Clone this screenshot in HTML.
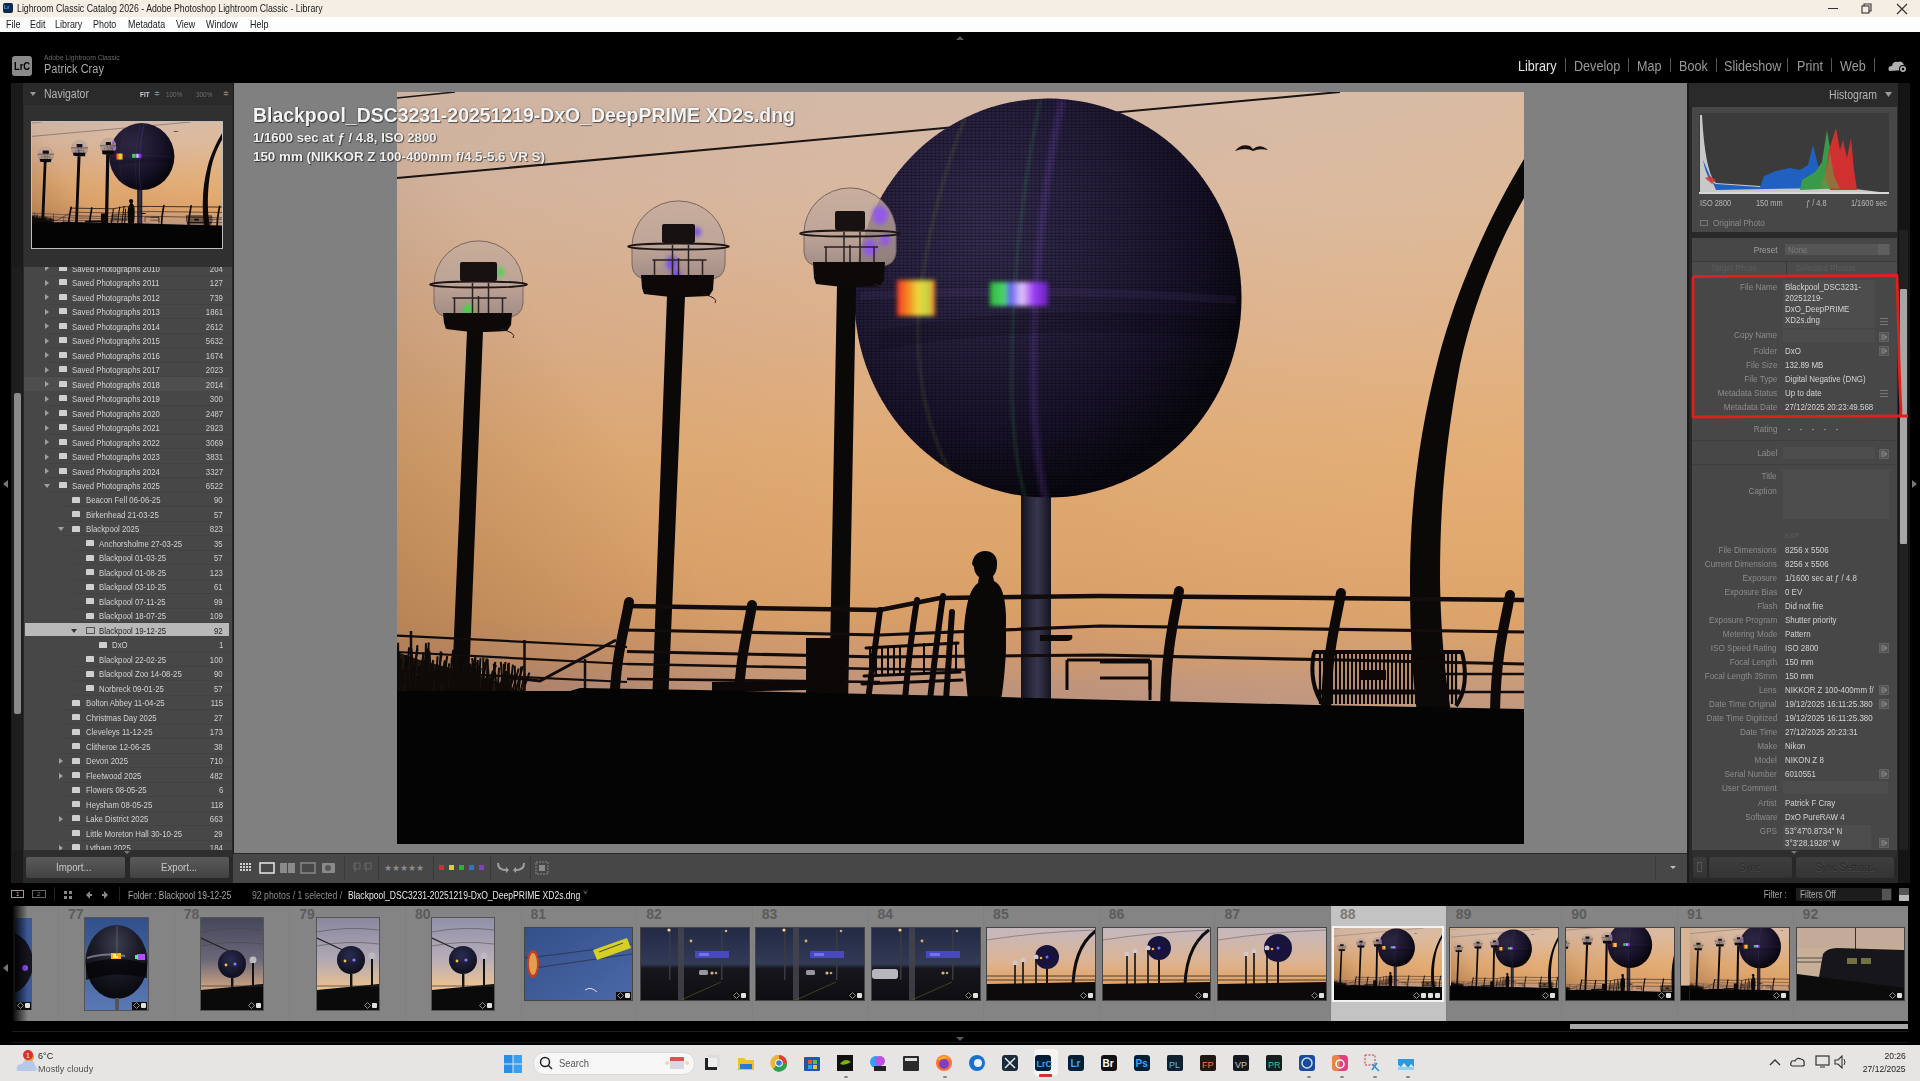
<!DOCTYPE html>
<html><head><meta charset="utf-8"><style>
html,body{margin:0;padding:0;width:1920px;height:1081px;overflow:hidden;background:#000;}
body{position:relative;font-family:"Liberation Sans",sans-serif;}
.b{position:absolute;}
.t{position:absolute;white-space:nowrap;line-height:1.2;}
svg.a{position:absolute;overflow:hidden;}
</style></head><body>
<svg width="0" height="0" style="position:absolute"><defs><symbol id="ph" viewBox="397 92 1127 752" preserveAspectRatio="none">
<defs>
<linearGradient id="sky" gradientUnits="userSpaceOnUse" x1="0" y1="92" x2="0" y2="712">
<stop offset="0" stop-color="#d4b9a8"/>
<stop offset="0.175" stop-color="#d9b89f"/>
<stop offset="0.385" stop-color="#ddb08a"/>
<stop offset="0.58" stop-color="#e0aa74"/>
<stop offset="0.74" stop-color="#dda46c"/>
<stop offset="0.85" stop-color="#d89e68"/>
<stop offset="0.915" stop-color="#cc9870"/>
<stop offset="0.96" stop-color="#bf947c"/>
<stop offset="1" stop-color="#b9927e"/>
</linearGradient>
<linearGradient id="skyd" gradientUnits="userSpaceOnUse" x1="397" y1="712" x2="680" y2="540">
<stop offset="0" stop-color="#40200e" stop-opacity="0.2"/>
<stop offset="1" stop-color="#4a2410" stop-opacity="0"/>
</linearGradient>
<linearGradient id="skyh" gradientUnits="userSpaceOnUse" x1="397" y1="0" x2="1524" y2="0">
<stop offset="0" stop-color="#3a2010" stop-opacity="0.04"/>
<stop offset="0.4" stop-color="#000" stop-opacity="0"/>
<stop offset="0.6" stop-color="#fff0c0" stop-opacity="0"/>
<stop offset="1" stop-color="#ffc878" stop-opacity="0.13"/>
</linearGradient>
<radialGradient id="sph" gradientUnits="userSpaceOnUse" cx="985" cy="225" r="275">
<stop offset="0" stop-color="#362e50"/>
<stop offset="0.45" stop-color="#261f3c"/>
<stop offset="0.78" stop-color="#171228"/>
<stop offset="1" stop-color="#0a0810"/>
</radialGradient>
<linearGradient id="dome" x1="0" y1="0" x2="0" y2="1">
<stop offset="0" stop-color="#c6ac9c" stop-opacity="0.8"/>
<stop offset="0.55" stop-color="#b8a298" stop-opacity="0.8"/>
<stop offset="1" stop-color="#9c8884" stop-opacity="0.9"/>
</linearGradient>
<pattern id="mosaic" patternUnits="userSpaceOnUse" width="4" height="3.2"><rect width="4" height="3.2" fill="none"/><rect y="2.2" width="4" height="1" fill="#000" opacity="0.35"/><rect x="3" width="1" height="3.2" fill="#000" opacity="0.2"/></pattern>
<clipPath id="sphclip"><ellipse cx="1048" cy="298" rx="193.5" ry="199.5"/></clipPath>
<filter id="blur3" x="-1" y="-1" width="3" height="3"><feGaussianBlur stdDeviation="3"/></filter>
<filter id="blur2" x="-1" y="-1" width="3" height="3"><feGaussianBlur stdDeviation="2"/></filter>
<filter id="blur1" x="-1" y="-1" width="3" height="3"><feGaussianBlur stdDeviation="1"/></filter>
</defs>
<rect x="397" y="92" width="1127" height="752" fill="url(#sky)"/>
<rect x="397" y="92" width="1127" height="752" fill="url(#skyh)"/>
<rect x="397" y="92" width="1127" height="752" fill="url(#skyd)"/>
<path d="M397 178 L1340 92" stroke="#1a1414" stroke-width="2" fill="none"/>
<path d="M397 98 L455 92" stroke="#1a1414" stroke-width="1.5" fill="none"/>
<path d="M1235 151 Q1241 143 1250 146 L1253 149 Q1260 143 1268 150 Q1259 148 1253 151 Q1246 147 1235 151Z" fill="#1a1212"/>
<defs><linearGradient id="spole" x1="0" x2="1"><stop offset="0" stop-color="#141219"/><stop offset="0.35" stop-color="#2c2a40"/><stop offset="0.55" stop-color="#38364e"/><stop offset="1" stop-color="#16141e"/></linearGradient></defs>
<path d="M1021 490 H1051 V706 H1021Z" fill="url(#spole)"/>
<ellipse cx="1048" cy="298" rx="193.5" ry="199.5" fill="url(#sph)"/>
<g clip-path="url(#sphclip)">
<path d="M968 110 C940 180 920 260 918 330 C918 400 935 450 960 490" stroke="#c0b040" stroke-width="4" opacity="0.13" fill="none" filter="url(#blur1)"/>
<path d="M1040 100 C1020 200 1010 300 1012 400 C1014 450 1020 480 1026 500" stroke="#40c060" stroke-width="4" opacity="0.16" fill="none" filter="url(#blur1)"/>
<path d="M1062 100 C1040 200 1032 300 1034 400 C1036 450 1040 480 1046 500" stroke="#a060ff" stroke-width="7" opacity="0.2" fill="none" filter="url(#blur2)"/>
<rect x="850" y="95" width="400" height="410" fill="url(#mosaic)"/>
</g>
<path d="M860 296 Q1048 286 1236 300" stroke="#6a4aa0" stroke-width="8" opacity="0.12" fill="none"/>
<path d="M880 330 Q1048 300 1236 320 L1236 340 Q1048 320 880 350Z" fill="#000" opacity="0.15"/>
<defs><linearGradient id="lyel" x1="0" x2="1"><stop offset="0" stop-color="#ff3a20"/><stop offset="0.3" stop-color="#ff9020"/><stop offset="0.55" stop-color="#f8e040"/><stop offset="0.8" stop-color="#d0e040"/><stop offset="1" stop-color="#ff8030"/></linearGradient><linearGradient id="lgp" x1="0" x2="1"><stop offset="0" stop-color="#30c040"/><stop offset="0.25" stop-color="#50e070"/><stop offset="0.35" stop-color="#6060ff"/><stop offset="0.55" stop-color="#f0d0ff"/><stop offset="0.75" stop-color="#a040ff"/><stop offset="1" stop-color="#7020c0"/></linearGradient></defs>
<rect x="897" y="280" width="38" height="36" fill="url(#lyel)" opacity="0.95" filter="url(#blur2)"/>
<rect x="990" y="282" width="58" height="24" fill="url(#lgp)" opacity="0.95" filter="url(#blur2)"/>
<path d="M434.0 284.5 A44.5 43.61 0 0 1 523.0 284.5 L523.0 303 Q522.0 317 507.0 317 L450.0 317 Q435.0 317 434.0 303Z" fill="url(#dome)" stroke="#7a6660" stroke-width="1"/>
<ellipse cx="500" cy="272" rx="4" ry="4.8" fill="#30e040" opacity="0.8" filter="url(#blur2)"/>
<ellipse cx="468" cy="310" rx="5" ry="6.0" fill="#30e040" opacity="0.8" filter="url(#blur2)"/>
<ellipse cx="478.5" cy="284.5" rx="48.5" ry="3" fill="none" stroke="#1e1616" stroke-width="1.8"/>
<rect x="460.0" y="262" width="37" height="19" rx="2" fill="#171111"/>
<path d="M452.5 298 H506.5 M454.5 298 V317 M502.5 298 V317 M472.5 283 V317 M488.5 283 V317 M478.5 296 V317" stroke="#2a2020" stroke-width="1.5"/>
<path d="M443.0 313 H512.0 L511.0 325 L507.0 331 L486.5 332 L470.5 332 L446.0 329 L444.0 323Z" fill="#0d0909"/>
<path d="M501.0 329 Q517.0 333 513.0 338" stroke="#2a1e1e" stroke-width="1" fill="none"/>
<path d="M467 331 L483 331 L468 706 L451 706Z" fill="#0b0808"/>
<path d="M632.0 246.5 A46.5 45.57 0 0 1 725.0 246.5 L725.0 265 Q724.0 279 709.0 279 L648.0 279 Q633.0 279 632.0 265Z" fill="url(#dome)" stroke="#7a6660" stroke-width="1"/>
<ellipse cx="697" cy="232" rx="4" ry="4.8" fill="#6a40ff" opacity="0.8" filter="url(#blur2)"/>
<ellipse cx="672" cy="263" rx="6" ry="7.199999999999999" fill="#6a40ff" opacity="0.8" filter="url(#blur2)"/>
<ellipse cx="676" cy="275" rx="5" ry="6.0" fill="#6a40ff" opacity="0.8" filter="url(#blur2)"/>
<ellipse cx="678.5" cy="246.5" rx="50.5" ry="3" fill="none" stroke="#1e1616" stroke-width="1.8"/>
<rect x="662.0" y="224" width="33" height="19" rx="2" fill="#171111"/>
<path d="M652.5 260 H706.5 M654.5 260 V279 M702.5 260 V279 M672.5 245 V279 M688.5 245 V279 M678.5 258 V279" stroke="#2a2020" stroke-width="1.5"/>
<path d="M641.0 275 H714.0 L713.0 290 L709.0 296 L686.5 297 L670.5 297 L644.0 294 L642.0 288Z" fill="#0d0909"/>
<path d="M703.0 294 Q719.0 298 715.0 303" stroke="#2a1e1e" stroke-width="1" fill="none"/>
<path d="M667 296 L685 296 L668 706 L652 706Z" fill="#0b0808"/>
<path d="M804.0 233.0 A46.0 45.08 0 0 1 896.0 233.0 L896.0 252 Q895.0 266 880.0 266 L820.0 266 Q805.0 266 804.0 252Z" fill="url(#dome)" stroke="#7a6660" stroke-width="1"/>
<ellipse cx="880" cy="215" rx="8" ry="9.6" fill="#9050ff" opacity="0.8" filter="url(#blur2)"/>
<ellipse cx="870" cy="248" rx="7" ry="8.4" fill="#9050ff" opacity="0.8" filter="url(#blur2)"/>
<ellipse cx="885" cy="240" rx="5" ry="6.0" fill="#9050ff" opacity="0.8" filter="url(#blur2)"/>
<ellipse cx="850" cy="233.5" rx="50.0" ry="3" fill="none" stroke="#1e1616" stroke-width="1.8"/>
<rect x="835.0" y="211" width="30" height="19" rx="2" fill="#171111"/>
<path d="M824 247 H878 M826 247 V266 M874 247 V266 M844 232 V266 M860 232 V266 M850 245 V266" stroke="#2a2020" stroke-width="1.5"/>
<path d="M813.0 262 H885.0 L884.0 280 L880.0 286 L858 287 L842 287 L816.0 284 L814.0 278Z" fill="#0d0909"/>
<path d="M874.0 284 Q890.0 288 886.0 293" stroke="#2a1e1e" stroke-width="1" fill="none"/>
<path d="M837 286 L856 286 L848 706 L829 706Z" fill="#0b0808"/>
<path d="M1524 159 C1490 215 1456 290 1438 360 C1420 430 1410 500 1410 580 C1410 640 1413 680 1417 712 L1451 712 C1446 680 1441 640 1440 580 C1440 500 1446 440 1460 365 C1474 300 1500 240 1524 198Z" fill="#0b0808"/>
<g stroke="#120c0c" fill="none">
<path d="M397 635.6 L627 647 M397 652 L627 664 M397 671 L627 682" stroke-width="2.2"/>
<path d="M411 631 V692 M524.5 640 V694 M585 659 V694" stroke-width="2.5"/>
<path d="M506 677 L540 681 L616 640" stroke-width="3"/>
<path d="M627 606 L880 610 L940 598 L1100 596 L1524 600" stroke-width="4.5"/>
<path d="M627 630 L880 635 L1100 626 L1524 632" stroke-width="3.2"/>
<path d="M627 651.5 L880 657 L1100 655 L1340 660 L1524 664" stroke-width="3.2"/>
<path d="M627 664 L880 669 L1000 670 M627 679 L880 682 M1440 674 L1524 674 M1440 692 L1524 692" stroke-width="2.6"/>
</g>
<path d="M629 602 C625 627 615 657 614 712" stroke="#0e0909" stroke-width="10" fill="none" stroke-linecap="round"/>
<path d="M752 605 C748 630 739 660 738 712" stroke="#0e0909" stroke-width="10" fill="none" stroke-linecap="round"/>
<path d="M1179 591 C1175 616 1166 646 1165 712" stroke="#0e0909" stroke-width="10" fill="none" stroke-linecap="round"/>
<path d="M1341 593 C1337 618 1327 648 1326 712" stroke="#0e0909" stroke-width="10" fill="none" stroke-linecap="round"/>
<path d="M1510 595 C1506 620 1496 650 1495 712" stroke="#0e0909" stroke-width="10" fill="none" stroke-linecap="round"/>
<rect x="806" y="638" width="40" height="60" fill="#0c0808"/>
<path d="M712 682 L806 680 L806 690 L712 692Z" fill="#0c0808"/>
<g stroke="#0c0808" stroke-linecap="round" fill="none">
<path d="M880 610 C876 640 872 670 868 700 M917 600 C912 630 908 665 905 700 M943 596 C938 630 934 665 930 700 M952 612 C950 640 948 670 946 700" stroke-width="6"/>
<path d="M866 648 L958 643 M864 676 L960 672 M862 684 L962 680" stroke-width="3"/>
<path d="M870 648 V676 M876 648 V676 M882 647 V675 M888 647 V675 M894 646 V674 M900 646 V674 M924 644 V673 M950 643 V672 M956 643 V672" stroke-width="2"/>
</g>
<path d="M1100 662 H1150 V700 M1100 678 H1150" stroke="#0c0808" stroke-width="3" fill="none"/>
<path d="M1040 635 H1072 Q1074 640 1068 641 H1040Z" fill="#0c0808"/>
<path d="M1067 660 H1150 M1067 660 V690 M1150 660 V690" stroke="#0c0808" stroke-width="3" fill="none"/>
<path d="M1314 652 Q1308 684 1324 706 M1462 652 Q1470 686 1456 706" stroke="#0c0808" stroke-width="4" fill="none"/>
<path d="M1313 652 H1463" stroke="#0c0808" stroke-width="4"/>
<path d="M1316 692 H1460" stroke="#0c0808" stroke-width="5"/>
<g stroke="#0c0808" stroke-width="2.2"><path d="M1320 654 V704"/><path d="M1324 654 V704"/><path d="M1328 654 V704"/><path d="M1332 654 V704"/><path d="M1336 654 V704"/><path d="M1340 654 V704"/><path d="M1344 654 V704"/><path d="M1348 654 V704"/><path d="M1352 654 V704"/><path d="M1356 654 V704"/><path d="M1360 654 V704"/><path d="M1364 654 V704"/><path d="M1368 654 V704"/><path d="M1372 654 V704"/><path d="M1376 654 V704"/><path d="M1380 654 V704"/><path d="M1384 654 V704"/><path d="M1388 654 V704"/><path d="M1392 654 V704"/><path d="M1396 654 V704"/><path d="M1400 654 V704"/><path d="M1404 654 V704"/><path d="M1408 654 V704"/><path d="M1412 654 V704"/><path d="M1416 654 V704"/><path d="M1420 654 V704"/><path d="M1424 654 V704"/><path d="M1428 654 V704"/><path d="M1432 654 V704"/><path d="M1436 654 V704"/><path d="M1440 654 V704"/><path d="M1444 654 V704"/><path d="M1448 654 V704"/><path d="M1452 654 V704"/><path d="M1456 654 V704"/></g>
<rect x="1360" y="670" width="26" height="10" fill="#0c0808"/>
<path d="M985 551 C993 551 998 557 997 565 C997 570 995 574 993 576 L994 581 C1002 585 1005 596 1006 615 L1006 650 C1005 670 1003 690 1001 700 L968 700 C966 680 963 652 964 630 C966 602 970 589 978 583 L979 577 C976 575 974 571 974 567 L972 564 C973 556 978 551 985 551Z" fill="#0a0707"/>
<g stroke="#0f0b09" stroke-width="2" fill="none"><path d="M426.7 700 Q427.2 679.8 427.7 659.6"/><path d="M472.5 700 Q470.8 681.8 469.2 663.7"/><path d="M398.6 700 Q398.4 671.3 398.1 642.7"/><path d="M426.3 700 Q427.5 671.2 428.7 642.5"/><path d="M501.6 700 Q503.9 685.5 506.3 671.0"/><path d="M415.8 700 Q419.8 677.2 423.8 654.4"/><path d="M462.4 700 Q465.0 679.4 467.6 658.8"/><path d="M405.0 700 Q407.0 673.7 409.1 647.4"/><path d="M434.7 700 Q438.6 689.4 442.6 678.9"/><path d="M456.1 700 Q460.1 679.1 464.2 658.3"/><path d="M486.3 700 Q486.9 679.6 487.6 659.1"/><path d="M497.1 700 Q501.6 685.6 506.0 671.1"/><path d="M506.9 700 Q505.7 689.1 504.6 678.3"/><path d="M424.1 700 Q425.1 671.6 426.0 643.1"/><path d="M475.3 700 Q476.8 686.2 478.2 672.3"/><path d="M445.2 700 Q447.2 684.2 449.2 668.4"/><path d="M470.0 700 Q472.7 677.9 475.4 655.8"/><path d="M513.1 700 Q518.0 683.2 522.8 666.3"/><path d="M480.9 700 Q484.8 688.0 488.8 676.1"/><path d="M517.6 700 Q519.5 683.3 521.3 666.6"/><path d="M486.2 700 Q489.9 687.6 493.7 675.2"/><path d="M468.7 700 Q467.0 686.1 465.4 672.3"/><path d="M503.7 700 Q502.3 680.9 500.8 661.9"/><path d="M497.1 700 Q496.0 685.9 495.0 671.8"/><path d="M433.7 700 Q437.7 676.2 441.8 652.5"/><path d="M402.5 700 Q400.7 676.6 399.0 653.2"/><path d="M486.8 700 Q490.9 686.3 494.9 672.5"/><path d="M519.6 700 Q524.5 686.4 529.4 672.7"/><path d="M435.7 700 Q437.8 688.6 439.9 677.3"/><path d="M400.9 700 Q401.7 685.7 402.4 671.3"/><path d="M473.3 700 Q471.5 688.0 469.7 676.0"/><path d="M505.5 700 Q510.1 687.2 514.7 674.4"/><path d="M509.1 700 Q510.2 686.8 511.3 673.6"/><path d="M462.0 700 Q464.1 680.7 466.1 661.5"/><path d="M466.9 700 Q471.4 681.5 475.9 662.9"/><path d="M460.4 700 Q463.3 683.7 466.3 667.4"/><path d="M426.7 700 Q431.4 684.3 436.2 668.7"/><path d="M462.1 700 Q460.1 682.1 458.1 664.3"/><path d="M448.9 700 Q446.9 680.7 445.0 661.4"/><path d="M474.0 700 Q472.3 681.9 470.6 663.7"/><path d="M475.4 700 Q478.1 684.1 480.7 668.2"/><path d="M441.1 700 Q444.1 678.0 447.2 656.0"/><path d="M399.8 700 Q402.4 688.7 405.0 677.3"/><path d="M517.4 700 Q518.5 688.1 519.6 676.3"/><path d="M471.1 700 Q471.5 685.8 472.0 671.5"/><path d="M436.1 700 Q438.2 683.5 440.2 667.0"/><path d="M434.6 700 Q437.9 683.3 441.2 666.6"/><path d="M400.4 700 Q403.4 677.4 406.5 654.9"/><path d="M435.8 700 Q439.3 686.1 442.8 672.1"/><path d="M426.8 700 Q427.8 686.5 428.7 673.0"/><path d="M484.3 700 Q484.4 688.8 484.6 677.6"/><path d="M438.7 700 Q439.7 675.6 440.7 651.2"/><path d="M503.9 700 Q504.2 688.5 504.5 676.9"/><path d="M478.3 700 Q479.3 679.1 480.4 658.2"/><path d="M425.1 700 Q426.7 687.7 428.3 675.4"/><path d="M420.9 700 Q424.6 674.3 428.4 648.5"/><path d="M419.9 700 Q423.5 684.5 427.0 669.1"/><path d="M477.2 700 Q477.6 679.9 477.9 659.9"/><path d="M413.2 700 Q416.7 684.0 420.1 668.0"/><path d="M430.9 700 Q431.7 683.7 432.5 667.3"/><path d="M449.5 700 Q453.8 683.5 458.2 666.9"/><path d="M416.5 700 Q421.0 689.9 425.5 679.8"/><path d="M507.0 700 Q507.9 681.4 508.9 662.7"/><path d="M515.8 700 Q515.2 682.9 514.7 665.8"/><path d="M490.2 700 Q492.7 680.9 495.3 661.8"/><path d="M461.9 700 Q462.2 685.8 462.5 671.7"/><path d="M425.4 700 Q427.5 688.7 429.5 677.4"/><path d="M432.9 700 Q431.1 675.4 429.3 650.8"/><path d="M510.0 700 Q514.3 684.2 518.7 668.4"/><path d="M509.1 700 Q511.0 682.4 512.9 664.7"/><path d="M398.6 700 Q397.7 673.4 396.8 646.8"/><path d="M434.5 700 Q436.1 678.2 437.6 656.4"/><path d="M448.7 700 Q450.9 674.9 453.1 649.9"/><path d="M439.7 700 Q443.6 685.7 447.5 671.3"/><path d="M456.6 700 Q457.0 678.2 457.4 656.5"/><path d="M421.7 700 Q425.3 679.6 428.9 659.2"/><path d="M418.4 700 Q422.8 674.3 427.1 648.6"/><path d="M497.8 700 Q495.7 681.8 493.7 663.7"/><path d="M475.6 700 Q473.8 679.1 472.1 658.1"/><path d="M430.9 700 Q432.5 685.1 434.1 670.2"/><path d="M449.9 700 Q453.2 682.5 456.5 665.0"/><path d="M397.2 700 Q396.0 688.8 394.8 677.5"/><path d="M412.6 700 Q417.3 688.6 422.0 677.2"/><path d="M503.8 700 Q505.2 689.2 506.6 678.4"/><path d="M436.5 700 Q436.8 684.5 437.2 668.9"/><path d="M477.9 700 Q478.3 682.7 478.7 665.5"/><path d="M420.9 700 Q419.7 683.6 418.4 667.2"/><path d="M466.4 700 Q467.0 680.1 467.6 660.2"/><path d="M407.0 700 Q407.5 686.2 408.0 672.4"/><path d="M472.6 700 Q473.1 679.8 473.7 659.6"/><path d="M497.1 700 Q498.1 683.8 499.0 667.6"/><path d="M443.6 700 Q446.4 681.7 449.2 663.4"/><path d="M449.6 700 Q450.7 678.9 451.8 657.9"/><path d="M427.6 700 Q430.4 680.0 433.2 660.0"/><path d="M405.9 700 Q406.8 680.9 407.7 661.8"/><path d="M507.0 700 Q507.5 681.8 508.0 663.6"/><path d="M509.2 700 Q509.0 683.3 508.7 666.6"/><path d="M455.0 700 Q458.6 688.1 462.2 676.2"/><path d="M479.8 700 Q483.2 679.2 486.7 658.4"/><path d="M480.4 700 Q482.3 681.1 484.1 662.3"/><path d="M409.9 700 Q407.8 677.7 405.8 655.4"/><path d="M414.9 700 Q413.1 674.3 411.4 648.6"/><path d="M408.5 700 Q412.5 687.9 416.6 675.8"/><path d="M419.4 700 Q423.2 689.5 427.0 679.1"/><path d="M412.2 700 Q414.8 672.6 417.4 645.2"/><path d="M501.5 700 Q503.5 681.0 505.4 662.0"/><path d="M496.8 700 Q500.1 689.6 503.4 679.3"/><path d="M460.9 700 Q459.6 679.6 458.2 659.2"/><path d="M490.6 700 Q488.9 679.9 487.3 659.8"/><path d="M437.5 700 Q441.2 680.2 444.9 660.3"/><path d="M427.3 700 Q426.9 686.6 426.6 673.3"/><path d="M474.0 700 Q474.7 680.3 475.3 660.6"/><path d="M442.9 700 Q443.3 683.4 443.6 666.7"/><path d="M449.3 700 Q450.7 688.7 452.1 677.3"/><path d="M518.6 700 Q521.8 687.0 524.9 674.0"/><path d="M417.1 700 Q420.3 676.2 423.5 652.4"/><path d="M481.2 700 Q482.5 683.8 483.8 667.6"/><path d="M477.4 700 Q476.3 678.8 475.3 657.6"/><path d="M409.0 700 Q413.3 674.3 417.6 648.6"/><path d="M461.7 700 Q464.6 683.6 467.5 667.2"/><path d="M420.3 700 Q419.6 684.8 418.9 669.5"/><path d="M470.2 700 Q469.7 685.8 469.3 671.6"/><path d="M483.4 700 Q483.4 678.8 483.3 657.7"/><path d="M485.2 700 Q489.0 685.3 492.9 670.5"/><path d="M470.1 700 Q469.5 686.4 468.9 672.9"/><path d="M399.9 700 Q400.5 679.4 401.0 658.8"/><path d="M418.5 700 Q418.7 682.9 418.8 665.7"/><path d="M493.8 700 Q498.6 688.5 503.5 677.0"/><path d="M456.9 700 Q458.1 681.0 459.3 662.0"/><path d="M501.3 700 Q503.1 682.2 504.9 664.5"/><path d="M457.2 700 Q461.1 679.2 465.0 658.4"/><path d="M447.0 700 Q451.7 678.1 456.3 656.2"/><path d="M455.4 700 Q455.0 686.5 454.5 673.0"/><path d="M486.7 700 Q491.3 682.4 495.9 664.8"/><path d="M503.7 700 Q503.0 687.8 502.2 675.6"/><path d="M429.3 700 Q432.2 686.5 435.0 673.1"/><path d="M504.3 700 Q504.0 681.8 503.7 663.7"/><path d="M505.1 700 Q506.0 687.2 506.9 674.4"/><path d="M488.1 700 Q486.7 689.0 485.2 678.1"/><path d="M501.2 700 Q501.6 687.2 502.0 674.5"/></g>
<path d="M397 700 L397 652 L420 660 L450 668 L480 676 L510 686 L530 700Z" fill="#0f0b09" opacity="0.92"/>
<path d="M397 691 L570 691 L580 688 L700 690 L1000 697 L1315 705 L1524 709 L1524 844 L397 844Z" fill="#050404"/>
</symbol></defs></svg>
<div class="b" style="left:0px;top:0px;width:1920px;height:17px;background:#f4eee5;"></div>
<div class="b" style="left:0px;top:17px;width:1920px;height:15px;background:#fdfdfd;"></div>
<div class="b" style="left:3px;top:3px;width:10px;height:10px;background:#0b2a4a;border-radius:2px;"></div>
<div class="t" style="left:4px;top:4.4px;font-size:6px;color:#5aa8ff;font-weight:bold;transform:scaleX(0.9);transform-origin:0 0;">Lr</div>
<div class="t" style="left:17px;top:2.2px;font-size:10.5px;color:#202020;transform:scaleX(0.835);transform-origin:0 0;">Lighroom Classic Catalog 2026 - Adobe Photoshop Lightroom Classic - Library</div>
<div class="t" style="left:6px;top:18.2px;font-size:10.5px;color:#202020;transform:scaleX(0.85);transform-origin:0 0;">File</div>
<div class="t" style="left:30px;top:18.2px;font-size:10.5px;color:#202020;transform:scaleX(0.85);transform-origin:0 0;">Edit</div>
<div class="t" style="left:55px;top:18.2px;font-size:10.5px;color:#202020;transform:scaleX(0.85);transform-origin:0 0;">Library</div>
<div class="t" style="left:93px;top:18.2px;font-size:10.5px;color:#202020;transform:scaleX(0.85);transform-origin:0 0;">Photo</div>
<div class="t" style="left:128px;top:18.2px;font-size:10.5px;color:#202020;transform:scaleX(0.85);transform-origin:0 0;">Metadata</div>
<div class="t" style="left:176px;top:18.2px;font-size:10.5px;color:#202020;transform:scaleX(0.85);transform-origin:0 0;">View</div>
<div class="t" style="left:206px;top:18.2px;font-size:10.5px;color:#202020;transform:scaleX(0.85);transform-origin:0 0;">Window</div>
<div class="t" style="left:250px;top:18.2px;font-size:10.5px;color:#202020;transform:scaleX(0.85);transform-origin:0 0;">Help</div>
<div class="b" style="left:1828px;top:8px;width:10px;height:1px;background:#333;"></div>
<svg class="a" style="left:1861px;top:3px" width="11" height="11"><rect x="1" y="3" width="7" height="7" fill="none" stroke="#333" stroke-width="1.1"/><path d="M3 3 V1 H10 V8 H8" fill="none" stroke="#333" stroke-width="1.1"/></svg>
<svg class="a" style="left:1896px;top:3px" width="12" height="12"><path d="M1 1L11 11M11 1L1 11" stroke="#333" stroke-width="1.2"/></svg>
<div class="b" style="left:0px;top:32px;width:1920px;height:51px;background:#000;"></div>
<div class="b" style="left:12px;top:56px;width:20px;height:20px;background:#8a8a8a;border-radius:3px;"></div>
<div class="t" style="left:13.5px;top:59.9px;font-size:11px;color:#000;font-weight:bold;transform:scaleX(0.85);transform-origin:0 0;">LrC</div>
<div class="t" style="left:44px;top:53.2px;font-size:8px;color:#6a6a6a;transform:scaleX(0.85);transform-origin:0 0;">Adobe Lightroom Classic</div>
<div class="t" style="left:44px;top:61.5px;font-size:12.5px;color:#a8a8a8;transform:scaleX(0.88);transform-origin:0 0;">Patrick Cray</div>
<div class="t" style="left:1517.5px;top:57.6px;font-size:14px;color:#e6e6e6;transform:scaleX(0.9);transform-origin:0 0;">Library</div>
<div class="t" style="left:1574px;top:57.6px;font-size:14px;color:#9a9a9a;transform:scaleX(0.9);transform-origin:0 0;">Develop</div>
<div class="t" style="left:1637px;top:57.6px;font-size:14px;color:#9a9a9a;transform:scaleX(0.9);transform-origin:0 0;">Map</div>
<div class="t" style="left:1679px;top:57.6px;font-size:14px;color:#9a9a9a;transform:scaleX(0.9);transform-origin:0 0;">Book</div>
<div class="t" style="left:1724px;top:57.6px;font-size:14px;color:#9a9a9a;transform:scaleX(0.9);transform-origin:0 0;">Slideshow</div>
<div class="t" style="left:1797px;top:57.6px;font-size:14px;color:#9a9a9a;transform:scaleX(0.9);transform-origin:0 0;">Print</div>
<div class="t" style="left:1840px;top:57.6px;font-size:14px;color:#9a9a9a;transform:scaleX(0.9);transform-origin:0 0;">Web</div>
<div class="b" style="left:1565px;top:58px;width:1px;height:14px;background:#555;"></div>
<div class="b" style="left:1628px;top:58px;width:1px;height:14px;background:#555;"></div>
<div class="b" style="left:1670px;top:58px;width:1px;height:14px;background:#555;"></div>
<div class="b" style="left:1716px;top:58px;width:1px;height:14px;background:#555;"></div>
<div class="b" style="left:1787px;top:58px;width:1px;height:14px;background:#555;"></div>
<div class="b" style="left:1831px;top:58px;width:1px;height:14px;background:#555;"></div>
<div class="b" style="left:1874px;top:58px;width:1px;height:14px;background:#555;"></div>
<svg class="a" style="left:1887px;top:58px" width="22" height="16"><path d="M2 13 Q0 8 5 8 Q6 3 11 4 Q15 2 17 7 Q20 8 19 12 Z" fill="#b0b0b0"/><circle cx="16" cy="11" r="4" fill="#000"/><circle cx="16" cy="11" r="3" fill="#b0b0b0"/><circle cx="16" cy="11" r="1.3" fill="#000"/></svg>
<div class="b" style="left:11px;top:83px;width:12px;height:800px;background:#1a1a1a;"></div>
<div class="b" style="left:23px;top:83px;width:210px;height:800px;background:#282828;"></div>
<div class="b" style="left:23px;top:84px;width:209px;height:21px;background:#2a2a2a;"></div>
<svg class="a" style="left:30px;top:92px" width="6" height="5"><path d="M0 0H6L3 4Z" fill="#9a9a9a"/></svg>
<div class="t" style="left:43.5px;top:87.0px;font-size:12.5px;color:#b4b4b4;transform:scaleX(0.84);transform-origin:0 0;">Navigator</div>
<div class="t" style="left:140px;top:90.0px;font-size:7.5px;color:#d0d0d0;font-weight:bold;transform:scaleX(0.85);transform-origin:0 0;">FIT</div>
<div class="t" style="left:154px;top:89.8px;font-size:7px;color:#888;transform:scaleX(1);transform-origin:0 0;">≑</div>
<div class="t" style="left:166px;top:90.0px;font-size:7.5px;color:#707070;transform:scaleX(0.85);transform-origin:0 0;">100%</div>
<div class="t" style="left:196px;top:90.0px;font-size:7.5px;color:#707070;transform:scaleX(0.85);transform-origin:0 0;">300%</div>
<div class="t" style="left:223px;top:89.8px;font-size:7px;color:#888;transform:scaleX(1);transform-origin:0 0;">≑</div>
<div class="b" style="left:24px;top:105px;width:208px;height:162px;background:#303030;"></div>
<div class="b" style="left:31px;top:121px;width:192px;height:128px;background:#bdbdbd;"></div>
<svg class="a" style="left:32px;top:122px" width="190" height="126"><use href="#ph" x="0" y="0" width="190" height="126"/></svg>
<div class="b" style="left:24px;top:267px;width:208px;height:583px;background:#474747;"></div>
<div class="b" style="left:12px;top:267px;width:10px;height:583px;background:#1e1e1e;"></div>
<div class="b" style="left:14px;top:393px;width:7px;height:321px;background:#8a8a8a;border-radius:2px;"></div>
<div class="b" style="left:24px;top:267px;width:208px;height:583px;overflow:hidden;">
<div class="b" style="left:24.0px;top:7.560000000000002px;width:181.0px;height:1px;background:#424242;"></div>
<svg class="a" style="left:21.3px;top:-1.7px" width="5" height="6"><path d="M0 0L4 3L0 6Z" fill="#a0a0a0"/></svg>
<div class="b" style="left:34.8px;top:-2.2px;width:8px;height:6px;background:#cfcfcf;border-radius:1px 1px 0 0;"></div>
<div class="t" style="left:48.099999999999994px;top:-4.4px;font-size:9.5px;color:#d2d2d2;transform:scaleX(0.82);transform-origin:0 0;">Saved Photographs 2010</div>
<div class="t" style="right:9.2px;top:-4.4px;font-size:9.5px;color:#cfcfcf;transform:scaleX(0.82);transform-origin:100% 0;">204</div>
<div class="b" style="left:24.0px;top:22.05000000000001px;width:181.0px;height:1px;background:#424242;"></div>
<svg class="a" style="left:21.3px;top:12.8px" width="5" height="6"><path d="M0 0L4 3L0 6Z" fill="#a0a0a0"/></svg>
<div class="b" style="left:34.8px;top:12.3px;width:8px;height:6px;background:#cfcfcf;border-radius:1px 1px 0 0;"></div>
<div class="t" style="left:48.099999999999994px;top:10.1px;font-size:9.5px;color:#d2d2d2;transform:scaleX(0.82);transform-origin:0 0;">Saved Photographs 2011</div>
<div class="t" style="right:9.2px;top:10.1px;font-size:9.5px;color:#cfcfcf;transform:scaleX(0.82);transform-origin:100% 0;">127</div>
<div class="b" style="left:24.0px;top:36.54000000000002px;width:181.0px;height:1px;background:#424242;"></div>
<svg class="a" style="left:21.3px;top:27.3px" width="5" height="6"><path d="M0 0L4 3L0 6Z" fill="#a0a0a0"/></svg>
<div class="b" style="left:34.8px;top:26.8px;width:8px;height:6px;background:#cfcfcf;border-radius:1px 1px 0 0;"></div>
<div class="t" style="left:48.099999999999994px;top:24.6px;font-size:9.5px;color:#d2d2d2;transform:scaleX(0.82);transform-origin:0 0;">Saved Photographs 2012</div>
<div class="t" style="right:9.2px;top:24.6px;font-size:9.5px;color:#cfcfcf;transform:scaleX(0.82);transform-origin:100% 0;">739</div>
<div class="b" style="left:24.0px;top:51.03000000000003px;width:181.0px;height:1px;background:#424242;"></div>
<svg class="a" style="left:21.3px;top:41.8px" width="5" height="6"><path d="M0 0L4 3L0 6Z" fill="#a0a0a0"/></svg>
<div class="b" style="left:34.8px;top:41.3px;width:8px;height:6px;background:#cfcfcf;border-radius:1px 1px 0 0;"></div>
<div class="t" style="left:48.099999999999994px;top:39.1px;font-size:9.5px;color:#d2d2d2;transform:scaleX(0.82);transform-origin:0 0;">Saved Photographs 2013</div>
<div class="t" style="right:9.2px;top:39.1px;font-size:9.5px;color:#cfcfcf;transform:scaleX(0.82);transform-origin:100% 0;">1861</div>
<div class="b" style="left:24.0px;top:65.51999999999998px;width:181.0px;height:1px;background:#424242;"></div>
<svg class="a" style="left:21.3px;top:56.3px" width="5" height="6"><path d="M0 0L4 3L0 6Z" fill="#a0a0a0"/></svg>
<div class="b" style="left:34.8px;top:55.8px;width:8px;height:6px;background:#cfcfcf;border-radius:1px 1px 0 0;"></div>
<div class="t" style="left:48.099999999999994px;top:53.6px;font-size:9.5px;color:#d2d2d2;transform:scaleX(0.82);transform-origin:0 0;">Saved Photographs 2014</div>
<div class="t" style="right:9.2px;top:53.6px;font-size:9.5px;color:#cfcfcf;transform:scaleX(0.82);transform-origin:100% 0;">2612</div>
<div class="b" style="left:24.0px;top:80.00999999999999px;width:181.0px;height:1px;background:#424242;"></div>
<svg class="a" style="left:21.3px;top:70.8px" width="5" height="6"><path d="M0 0L4 3L0 6Z" fill="#a0a0a0"/></svg>
<div class="b" style="left:34.8px;top:70.3px;width:8px;height:6px;background:#cfcfcf;border-radius:1px 1px 0 0;"></div>
<div class="t" style="left:48.099999999999994px;top:68.1px;font-size:9.5px;color:#d2d2d2;transform:scaleX(0.82);transform-origin:0 0;">Saved Photographs 2015</div>
<div class="t" style="right:9.2px;top:68.1px;font-size:9.5px;color:#cfcfcf;transform:scaleX(0.82);transform-origin:100% 0;">5632</div>
<div class="b" style="left:24.0px;top:94.5px;width:181.0px;height:1px;background:#424242;"></div>
<svg class="a" style="left:21.3px;top:85.2px" width="5" height="6"><path d="M0 0L4 3L0 6Z" fill="#a0a0a0"/></svg>
<div class="b" style="left:34.8px;top:84.8px;width:8px;height:6px;background:#cfcfcf;border-radius:1px 1px 0 0;"></div>
<div class="t" style="left:48.099999999999994px;top:82.5px;font-size:9.5px;color:#d2d2d2;transform:scaleX(0.82);transform-origin:0 0;">Saved Photographs 2016</div>
<div class="t" style="right:9.2px;top:82.5px;font-size:9.5px;color:#cfcfcf;transform:scaleX(0.82);transform-origin:100% 0;">1674</div>
<div class="b" style="left:24.0px;top:108.99000000000001px;width:181.0px;height:1px;background:#424242;"></div>
<svg class="a" style="left:21.3px;top:99.7px" width="5" height="6"><path d="M0 0L4 3L0 6Z" fill="#a0a0a0"/></svg>
<div class="b" style="left:34.8px;top:99.2px;width:8px;height:6px;background:#cfcfcf;border-radius:1px 1px 0 0;"></div>
<div class="t" style="left:48.099999999999994px;top:97.0px;font-size:9.5px;color:#d2d2d2;transform:scaleX(0.82);transform-origin:0 0;">Saved Photographs 2017</div>
<div class="t" style="right:9.2px;top:97.0px;font-size:9.5px;color:#cfcfcf;transform:scaleX(0.82);transform-origin:100% 0;">2023</div>
<div class="b" style="left:0px;top:109.98000000000002px;width:205px;height:14px;background:#4e4e4e;"></div>
<svg class="a" style="left:21.3px;top:114.2px" width="5" height="6"><path d="M0 0L4 3L0 6Z" fill="#a0a0a0"/></svg>
<div class="b" style="left:34.8px;top:113.7px;width:8px;height:6px;background:#cfcfcf;border-radius:1px 1px 0 0;"></div>
<div class="t" style="left:48.099999999999994px;top:111.5px;font-size:9.5px;color:#d2d2d2;transform:scaleX(0.82);transform-origin:0 0;">Saved Photographs 2018</div>
<div class="t" style="right:9.2px;top:111.5px;font-size:9.5px;color:#cfcfcf;transform:scaleX(0.82);transform-origin:100% 0;">2014</div>
<div class="b" style="left:24.0px;top:137.97000000000003px;width:181.0px;height:1px;background:#424242;"></div>
<svg class="a" style="left:21.3px;top:128.7px" width="5" height="6"><path d="M0 0L4 3L0 6Z" fill="#a0a0a0"/></svg>
<div class="b" style="left:34.8px;top:128.2px;width:8px;height:6px;background:#cfcfcf;border-radius:1px 1px 0 0;"></div>
<div class="t" style="left:48.099999999999994px;top:126.0px;font-size:9.5px;color:#d2d2d2;transform:scaleX(0.82);transform-origin:0 0;">Saved Photographs 2019</div>
<div class="t" style="right:9.2px;top:126.0px;font-size:9.5px;color:#cfcfcf;transform:scaleX(0.82);transform-origin:100% 0;">300</div>
<div class="b" style="left:24.0px;top:152.46000000000004px;width:181.0px;height:1px;background:#424242;"></div>
<svg class="a" style="left:21.3px;top:143.2px" width="5" height="6"><path d="M0 0L4 3L0 6Z" fill="#a0a0a0"/></svg>
<div class="b" style="left:34.8px;top:142.7px;width:8px;height:6px;background:#cfcfcf;border-radius:1px 1px 0 0;"></div>
<div class="t" style="left:48.099999999999994px;top:140.5px;font-size:9.5px;color:#d2d2d2;transform:scaleX(0.82);transform-origin:0 0;">Saved Photographs 2020</div>
<div class="t" style="right:9.2px;top:140.5px;font-size:9.5px;color:#cfcfcf;transform:scaleX(0.82);transform-origin:100% 0;">2487</div>
<div class="b" style="left:24.0px;top:166.95000000000005px;width:181.0px;height:1px;background:#424242;"></div>
<svg class="a" style="left:21.3px;top:157.7px" width="5" height="6"><path d="M0 0L4 3L0 6Z" fill="#a0a0a0"/></svg>
<div class="b" style="left:34.8px;top:157.2px;width:8px;height:6px;background:#cfcfcf;border-radius:1px 1px 0 0;"></div>
<div class="t" style="left:48.099999999999994px;top:155.0px;font-size:9.5px;color:#d2d2d2;transform:scaleX(0.82);transform-origin:0 0;">Saved Photographs 2021</div>
<div class="t" style="right:9.2px;top:155.0px;font-size:9.5px;color:#cfcfcf;transform:scaleX(0.82);transform-origin:100% 0;">2923</div>
<div class="b" style="left:24.0px;top:181.44000000000005px;width:181.0px;height:1px;background:#424242;"></div>
<svg class="a" style="left:21.3px;top:172.2px" width="5" height="6"><path d="M0 0L4 3L0 6Z" fill="#a0a0a0"/></svg>
<div class="b" style="left:34.8px;top:171.7px;width:8px;height:6px;background:#cfcfcf;border-radius:1px 1px 0 0;"></div>
<div class="t" style="left:48.099999999999994px;top:169.5px;font-size:9.5px;color:#d2d2d2;transform:scaleX(0.82);transform-origin:0 0;">Saved Photographs 2022</div>
<div class="t" style="right:9.2px;top:169.5px;font-size:9.5px;color:#cfcfcf;transform:scaleX(0.82);transform-origin:100% 0;">3069</div>
<div class="b" style="left:24.0px;top:195.93px;width:181.0px;height:1px;background:#424242;"></div>
<svg class="a" style="left:21.3px;top:186.7px" width="5" height="6"><path d="M0 0L4 3L0 6Z" fill="#a0a0a0"/></svg>
<div class="b" style="left:34.8px;top:186.2px;width:8px;height:6px;background:#cfcfcf;border-radius:1px 1px 0 0;"></div>
<div class="t" style="left:48.099999999999994px;top:184.0px;font-size:9.5px;color:#d2d2d2;transform:scaleX(0.82);transform-origin:0 0;">Saved Photographs 2023</div>
<div class="t" style="right:9.2px;top:184.0px;font-size:9.5px;color:#cfcfcf;transform:scaleX(0.82);transform-origin:100% 0;">3831</div>
<div class="b" style="left:24.0px;top:210.42000000000002px;width:181.0px;height:1px;background:#424242;"></div>
<svg class="a" style="left:21.3px;top:201.2px" width="5" height="6"><path d="M0 0L4 3L0 6Z" fill="#a0a0a0"/></svg>
<div class="b" style="left:34.8px;top:200.7px;width:8px;height:6px;background:#cfcfcf;border-radius:1px 1px 0 0;"></div>
<div class="t" style="left:48.099999999999994px;top:198.5px;font-size:9.5px;color:#d2d2d2;transform:scaleX(0.82);transform-origin:0 0;">Saved Photographs 2024</div>
<div class="t" style="right:9.2px;top:198.5px;font-size:9.5px;color:#cfcfcf;transform:scaleX(0.82);transform-origin:100% 0;">3327</div>
<div class="b" style="left:24.0px;top:224.91000000000003px;width:181.0px;height:1px;background:#424242;"></div>
<svg class="a" style="left:20.3px;top:216.7px" width="6" height="5"><path d="M0 0H6L3 4Z" fill="#a0a0a0"/></svg>
<div class="b" style="left:34.8px;top:215.2px;width:8px;height:6px;background:#cfcfcf;border-radius:1px 1px 0 0;"></div>
<div class="t" style="left:48.099999999999994px;top:213.0px;font-size:9.5px;color:#d2d2d2;transform:scaleX(0.82);transform-origin:0 0;">Saved Photographs 2025</div>
<div class="t" style="right:9.2px;top:213.0px;font-size:9.5px;color:#cfcfcf;transform:scaleX(0.82);transform-origin:100% 0;">6522</div>
<div class="b" style="left:37.5px;top:239.39999999999998px;width:167.5px;height:1px;background:#424242;"></div>
<div class="b" style="left:48.2px;top:229.6px;width:8px;height:6px;background:#cfcfcf;border-radius:1px 1px 0 0;"></div>
<div class="t" style="left:61.5px;top:227.4px;font-size:9.5px;color:#d2d2d2;transform:scaleX(0.82);transform-origin:0 0;">Beacon Fell 06-06-25</div>
<div class="t" style="right:9.2px;top:227.4px;font-size:9.5px;color:#cfcfcf;transform:scaleX(0.82);transform-origin:100% 0;">90</div>
<div class="b" style="left:37.5px;top:253.89px;width:167.5px;height:1px;background:#424242;"></div>
<div class="b" style="left:48.2px;top:244.1px;width:8px;height:6px;background:#cfcfcf;border-radius:1px 1px 0 0;"></div>
<div class="t" style="left:61.5px;top:241.9px;font-size:9.5px;color:#d2d2d2;transform:scaleX(0.82);transform-origin:0 0;">Birkenhead 21-03-25</div>
<div class="t" style="right:9.2px;top:241.9px;font-size:9.5px;color:#cfcfcf;transform:scaleX(0.82);transform-origin:100% 0;">57</div>
<div class="b" style="left:37.5px;top:268.38px;width:167.5px;height:1px;background:#424242;"></div>
<svg class="a" style="left:33.5px;top:260.1px" width="6" height="5"><path d="M0 0H6L3 4Z" fill="#a0a0a0"/></svg>
<div class="b" style="left:48.2px;top:258.6px;width:8px;height:6px;background:#cfcfcf;border-radius:1px 1px 0 0;"></div>
<div class="t" style="left:61.5px;top:256.4px;font-size:9.5px;color:#d2d2d2;transform:scaleX(0.82);transform-origin:0 0;">Blackpool 2025</div>
<div class="t" style="right:9.2px;top:256.4px;font-size:9.5px;color:#cfcfcf;transform:scaleX(0.82);transform-origin:100% 0;">823</div>
<div class="b" style="left:51.0px;top:282.87px;width:154.0px;height:1px;background:#424242;"></div>
<div class="b" style="left:61.6px;top:273.1px;width:8px;height:6px;background:#cfcfcf;border-radius:1px 1px 0 0;"></div>
<div class="t" style="left:74.89999999999999px;top:270.9px;font-size:9.5px;color:#d2d2d2;transform:scaleX(0.82);transform-origin:0 0;">Anchorsholme 27-03-25</div>
<div class="t" style="right:9.2px;top:270.9px;font-size:9.5px;color:#cfcfcf;transform:scaleX(0.82);transform-origin:100% 0;">35</div>
<div class="b" style="left:51.0px;top:297.36px;width:154.0px;height:1px;background:#424242;"></div>
<div class="b" style="left:61.6px;top:287.6px;width:8px;height:6px;background:#cfcfcf;border-radius:1px 1px 0 0;"></div>
<div class="t" style="left:74.89999999999999px;top:285.4px;font-size:9.5px;color:#d2d2d2;transform:scaleX(0.82);transform-origin:0 0;">Blackpool 01-03-25</div>
<div class="t" style="right:9.2px;top:285.4px;font-size:9.5px;color:#cfcfcf;transform:scaleX(0.82);transform-origin:100% 0;">57</div>
<div class="b" style="left:51.0px;top:311.85px;width:154.0px;height:1px;background:#424242;"></div>
<div class="b" style="left:61.6px;top:302.1px;width:8px;height:6px;background:#cfcfcf;border-radius:1px 1px 0 0;"></div>
<div class="t" style="left:74.89999999999999px;top:299.9px;font-size:9.5px;color:#d2d2d2;transform:scaleX(0.82);transform-origin:0 0;">Blackpool 01-08-25</div>
<div class="t" style="right:9.2px;top:299.9px;font-size:9.5px;color:#cfcfcf;transform:scaleX(0.82);transform-origin:100% 0;">123</div>
<div class="b" style="left:51.0px;top:326.34000000000003px;width:154.0px;height:1px;background:#424242;"></div>
<div class="b" style="left:61.6px;top:316.6px;width:8px;height:6px;background:#cfcfcf;border-radius:1px 1px 0 0;"></div>
<div class="t" style="left:74.89999999999999px;top:314.4px;font-size:9.5px;color:#d2d2d2;transform:scaleX(0.82);transform-origin:0 0;">Blackpool 03-10-25</div>
<div class="t" style="right:9.2px;top:314.4px;font-size:9.5px;color:#cfcfcf;transform:scaleX(0.82);transform-origin:100% 0;">61</div>
<div class="b" style="left:51.0px;top:340.83000000000004px;width:154.0px;height:1px;background:#424242;"></div>
<div class="b" style="left:61.6px;top:331.1px;width:8px;height:6px;background:#cfcfcf;border-radius:1px 1px 0 0;"></div>
<div class="t" style="left:74.89999999999999px;top:328.9px;font-size:9.5px;color:#d2d2d2;transform:scaleX(0.82);transform-origin:0 0;">Blackpool 07-11-25</div>
<div class="t" style="right:9.2px;top:328.9px;font-size:9.5px;color:#cfcfcf;transform:scaleX(0.82);transform-origin:100% 0;">99</div>
<div class="b" style="left:51.0px;top:355.31999999999994px;width:154.0px;height:1px;background:#424242;"></div>
<div class="b" style="left:61.6px;top:345.6px;width:8px;height:6px;background:#cfcfcf;border-radius:1px 1px 0 0;"></div>
<div class="t" style="left:74.89999999999999px;top:343.4px;font-size:9.5px;color:#d2d2d2;transform:scaleX(0.82);transform-origin:0 0;">Blackpool 18-07-25</div>
<div class="t" style="right:9.2px;top:343.4px;font-size:9.5px;color:#cfcfcf;transform:scaleX(0.82);transform-origin:100% 0;">109</div>
<div class="b" style="left:1px;top:356.30999999999995px;width:204px;height:13px;background:#b9b9b9;"></div>
<svg class="a" style="left:46.7px;top:361.6px" width="6" height="5"><path d="M0 0H6L3 4Z" fill="#333"/></svg>
<div class="b" style="left:61.6px;top:360.1px;width:7px;height:5px;border:1px solid #555;"></div>
<div class="t" style="left:74.89999999999999px;top:357.9px;font-size:9.5px;color:#1e1e1e;transform:scaleX(0.82);transform-origin:0 0;">Blackpool 19-12-25</div>
<div class="t" style="right:9.2px;top:357.9px;font-size:9.5px;color:#1e1e1e;transform:scaleX(0.82);transform-origin:100% 0;">92</div>
<div class="b" style="left:64.5px;top:384.29999999999995px;width:140.5px;height:1px;background:#424242;"></div>
<div class="b" style="left:75.0px;top:374.5px;width:8px;height:6px;background:#cfcfcf;border-radius:1px 1px 0 0;"></div>
<div class="t" style="left:88.3px;top:372.3px;font-size:9.5px;color:#d2d2d2;transform:scaleX(0.82);transform-origin:0 0;">DxO</div>
<div class="t" style="right:9.2px;top:372.3px;font-size:9.5px;color:#cfcfcf;transform:scaleX(0.82);transform-origin:100% 0;">1</div>
<div class="b" style="left:51.0px;top:398.78999999999996px;width:154.0px;height:1px;background:#424242;"></div>
<div class="b" style="left:61.6px;top:389.0px;width:8px;height:6px;background:#cfcfcf;border-radius:1px 1px 0 0;"></div>
<div class="t" style="left:74.89999999999999px;top:386.8px;font-size:9.5px;color:#d2d2d2;transform:scaleX(0.82);transform-origin:0 0;">Blackpool 22-02-25</div>
<div class="t" style="right:9.2px;top:386.8px;font-size:9.5px;color:#cfcfcf;transform:scaleX(0.82);transform-origin:100% 0;">100</div>
<div class="b" style="left:51.0px;top:413.28px;width:154.0px;height:1px;background:#424242;"></div>
<div class="b" style="left:61.6px;top:403.5px;width:8px;height:6px;background:#cfcfcf;border-radius:1px 1px 0 0;"></div>
<div class="t" style="left:74.89999999999999px;top:401.3px;font-size:9.5px;color:#d2d2d2;transform:scaleX(0.82);transform-origin:0 0;">Blackpool Zoo 14-08-25</div>
<div class="t" style="right:9.2px;top:401.3px;font-size:9.5px;color:#cfcfcf;transform:scaleX(0.82);transform-origin:100% 0;">90</div>
<div class="b" style="left:51.0px;top:427.77px;width:154.0px;height:1px;background:#424242;"></div>
<div class="b" style="left:61.6px;top:418.0px;width:8px;height:6px;background:#cfcfcf;border-radius:1px 1px 0 0;"></div>
<div class="t" style="left:74.89999999999999px;top:415.8px;font-size:9.5px;color:#d2d2d2;transform:scaleX(0.82);transform-origin:0 0;">Norbreck 09-01-25</div>
<div class="t" style="right:9.2px;top:415.8px;font-size:9.5px;color:#cfcfcf;transform:scaleX(0.82);transform-origin:100% 0;">57</div>
<div class="b" style="left:37.5px;top:442.26px;width:167.5px;height:1px;background:#424242;"></div>
<div class="b" style="left:48.2px;top:432.5px;width:8px;height:6px;background:#cfcfcf;border-radius:1px 1px 0 0;"></div>
<div class="t" style="left:61.5px;top:430.3px;font-size:9.5px;color:#d2d2d2;transform:scaleX(0.82);transform-origin:0 0;">Bolton Abbey 11-04-25</div>
<div class="t" style="right:9.2px;top:430.3px;font-size:9.5px;color:#cfcfcf;transform:scaleX(0.82);transform-origin:100% 0;">115</div>
<div class="b" style="left:37.5px;top:456.75px;width:167.5px;height:1px;background:#424242;"></div>
<div class="b" style="left:48.2px;top:447.0px;width:8px;height:6px;background:#cfcfcf;border-radius:1px 1px 0 0;"></div>
<div class="t" style="left:61.5px;top:444.8px;font-size:9.5px;color:#d2d2d2;transform:scaleX(0.82);transform-origin:0 0;">Christmas Day 2025</div>
<div class="t" style="right:9.2px;top:444.8px;font-size:9.5px;color:#cfcfcf;transform:scaleX(0.82);transform-origin:100% 0;">27</div>
<div class="b" style="left:37.5px;top:471.24px;width:167.5px;height:1px;background:#424242;"></div>
<div class="b" style="left:48.2px;top:461.5px;width:8px;height:6px;background:#cfcfcf;border-radius:1px 1px 0 0;"></div>
<div class="t" style="left:61.5px;top:459.3px;font-size:9.5px;color:#d2d2d2;transform:scaleX(0.82);transform-origin:0 0;">Cleveleys 11-12-25</div>
<div class="t" style="right:9.2px;top:459.3px;font-size:9.5px;color:#cfcfcf;transform:scaleX(0.82);transform-origin:100% 0;">173</div>
<div class="b" style="left:37.5px;top:485.73px;width:167.5px;height:1px;background:#424242;"></div>
<div class="b" style="left:48.2px;top:476.0px;width:8px;height:6px;background:#cfcfcf;border-radius:1px 1px 0 0;"></div>
<div class="t" style="left:61.5px;top:473.8px;font-size:9.5px;color:#d2d2d2;transform:scaleX(0.82);transform-origin:0 0;">Clitheroe 12-06-25</div>
<div class="t" style="right:9.2px;top:473.8px;font-size:9.5px;color:#cfcfcf;transform:scaleX(0.82);transform-origin:100% 0;">38</div>
<div class="b" style="left:37.5px;top:500.22px;width:167.5px;height:1px;background:#424242;"></div>
<svg class="a" style="left:34.5px;top:491.0px" width="5" height="6"><path d="M0 0L4 3L0 6Z" fill="#a0a0a0"/></svg>
<div class="b" style="left:48.2px;top:490.5px;width:8px;height:6px;background:#cfcfcf;border-radius:1px 1px 0 0;"></div>
<div class="t" style="left:61.5px;top:488.3px;font-size:9.5px;color:#d2d2d2;transform:scaleX(0.82);transform-origin:0 0;">Devon 2025</div>
<div class="t" style="right:9.2px;top:488.3px;font-size:9.5px;color:#cfcfcf;transform:scaleX(0.82);transform-origin:100% 0;">710</div>
<div class="b" style="left:37.5px;top:514.71px;width:167.5px;height:1px;background:#424242;"></div>
<svg class="a" style="left:34.5px;top:505.5px" width="5" height="6"><path d="M0 0L4 3L0 6Z" fill="#a0a0a0"/></svg>
<div class="b" style="left:48.2px;top:505.0px;width:8px;height:6px;background:#cfcfcf;border-radius:1px 1px 0 0;"></div>
<div class="t" style="left:61.5px;top:502.8px;font-size:9.5px;color:#d2d2d2;transform:scaleX(0.82);transform-origin:0 0;">Fleetwood 2025</div>
<div class="t" style="right:9.2px;top:502.8px;font-size:9.5px;color:#cfcfcf;transform:scaleX(0.82);transform-origin:100% 0;">482</div>
<div class="b" style="left:37.5px;top:529.2px;width:167.5px;height:1px;background:#424242;"></div>
<div class="b" style="left:48.2px;top:519.5px;width:8px;height:6px;background:#cfcfcf;border-radius:1px 1px 0 0;"></div>
<div class="t" style="left:61.5px;top:517.2px;font-size:9.5px;color:#d2d2d2;transform:scaleX(0.82);transform-origin:0 0;">Flowers 08-05-25</div>
<div class="t" style="right:9.2px;top:517.2px;font-size:9.5px;color:#cfcfcf;transform:scaleX(0.82);transform-origin:100% 0;">6</div>
<div class="b" style="left:37.5px;top:543.69px;width:167.5px;height:1px;background:#424242;"></div>
<div class="b" style="left:48.2px;top:533.9px;width:8px;height:6px;background:#cfcfcf;border-radius:1px 1px 0 0;"></div>
<div class="t" style="left:61.5px;top:531.7px;font-size:9.5px;color:#d2d2d2;transform:scaleX(0.82);transform-origin:0 0;">Heysham 08-05-25</div>
<div class="t" style="right:9.2px;top:531.7px;font-size:9.5px;color:#cfcfcf;transform:scaleX(0.82);transform-origin:100% 0;">118</div>
<div class="b" style="left:37.5px;top:558.1800000000001px;width:167.5px;height:1px;background:#424242;"></div>
<svg class="a" style="left:34.5px;top:548.9px" width="5" height="6"><path d="M0 0L4 3L0 6Z" fill="#a0a0a0"/></svg>
<div class="b" style="left:48.2px;top:548.4px;width:8px;height:6px;background:#cfcfcf;border-radius:1px 1px 0 0;"></div>
<div class="t" style="left:61.5px;top:546.2px;font-size:9.5px;color:#d2d2d2;transform:scaleX(0.82);transform-origin:0 0;">Lake District 2025</div>
<div class="t" style="right:9.2px;top:546.2px;font-size:9.5px;color:#cfcfcf;transform:scaleX(0.82);transform-origin:100% 0;">663</div>
<div class="b" style="left:37.5px;top:572.6700000000001px;width:167.5px;height:1px;background:#424242;"></div>
<div class="b" style="left:48.2px;top:562.9px;width:8px;height:6px;background:#cfcfcf;border-radius:1px 1px 0 0;"></div>
<div class="t" style="left:61.5px;top:560.7px;font-size:9.5px;color:#d2d2d2;transform:scaleX(0.82);transform-origin:0 0;">Little Moreton Hall 30-10-25</div>
<div class="t" style="right:9.2px;top:560.7px;font-size:9.5px;color:#cfcfcf;transform:scaleX(0.82);transform-origin:100% 0;">29</div>
<div class="b" style="left:37.5px;top:587.1600000000001px;width:167.5px;height:1px;background:#424242;"></div>
<svg class="a" style="left:34.5px;top:577.9px" width="5" height="6"><path d="M0 0L4 3L0 6Z" fill="#a0a0a0"/></svg>
<div class="b" style="left:48.2px;top:577.4px;width:8px;height:6px;background:#cfcfcf;border-radius:1px 1px 0 0;"></div>
<div class="t" style="left:61.5px;top:575.2px;font-size:9.5px;color:#d2d2d2;transform:scaleX(0.82);transform-origin:0 0;">Lytham 2025</div>
<div class="t" style="right:9.2px;top:575.2px;font-size:9.5px;color:#cfcfcf;transform:scaleX(0.82);transform-origin:100% 0;">184</div>
</div>
<div class="b" style="left:24px;top:850px;width:208px;height:7px;background:#2e2e2e;"></div>
<svg class="a" style="left:124px;top:851px" width="6" height="4"><path d="M0 0H6L3 3Z" fill="#777"/></svg>
<div class="b" style="left:23px;top:857px;width:210px;height:26px;background:#282828;"></div>
<div class="b" style="left:26px;top:857px;width:99px;height:21px;background:linear-gradient(#5a5a5a,#424242);border-radius:2px;"></div>
<div class="b" style="left:130px;top:857px;width:99px;height:21px;background:linear-gradient(#5a5a5a,#424242);border-radius:2px;"></div>
<div class="t" style="left:56px;top:861.4px;font-size:11px;color:#c8c8c8;transform:scaleX(0.88);transform-origin:0 0;">Import...</div>
<div class="t" style="left:161px;top:861.4px;font-size:11px;color:#c8c8c8;transform:scaleX(0.88);transform-origin:0 0;">Export...</div>
<div class="b" style="left:233px;top:83px;width:1455px;height:770px;background:#1a1a1a;"></div>
<div class="b" style="left:234px;top:83px;width:1453px;height:770px;background:#808080;"></div>
<svg class="a" style="left:397px;top:92px" width="1127" height="752"><use href="#ph" x="0" y="0" width="1127" height="752"/></svg>
<div class="t" style="left:253px;top:102.4px;font-size:21px;color:#f4f4f4;font-weight:bold;transform:scaleX(0.925);transform-origin:0 0;text-shadow:1px 1px 1px rgba(0,0,0,0.55),0 0 2px rgba(0,0,0,0.4);">Blackpool_DSC3231-20251219-DxO_DeepPRIME XD2s.dng</div>
<div class="t" style="left:253px;top:130.4px;font-size:13.5px;color:#f0f0f0;font-weight:bold;transform:scaleX(0.97);transform-origin:0 0;text-shadow:1px 1px 1px rgba(0,0,0,0.55),0 0 2px rgba(0,0,0,0.4);">1/1600 sec at ƒ / 4.8, ISO 2800</div>
<div class="t" style="left:253px;top:149.4px;font-size:13.5px;color:#f0f0f0;font-weight:bold;transform:scaleX(0.99);transform-origin:0 0;text-shadow:1px 1px 1px rgba(0,0,0,0.55),0 0 2px rgba(0,0,0,0.4);">150 mm (NIKKOR Z 100-400mm f/4.5-5.6 VR S)</div>
<svg class="a" style="left:956px;top:36px" width="8" height="4"><path d="M0 4L4 0L8 4Z" fill="#555"/></svg>
<div class="b" style="left:233px;top:853px;width:1455px;height:30px;background:#474747;"></div>
<div class="b" style="left:233px;top:853px;width:1455px;height:1px;background:#2a2a2a;"></div>
<svg class="a" style="left:238px;top:860px" width="120" height="16"><g fill="#cfcfcf"><rect x="2" y="3" width="2" height="2"/><rect x="5" y="3" width="2" height="2"/><rect x="8" y="3" width="2" height="2"/><rect x="11" y="3" width="2" height="2"/><rect x="2" y="6" width="2" height="2"/><rect x="5" y="6" width="2" height="2"/><rect x="8" y="6" width="2" height="2"/><rect x="11" y="6" width="2" height="2"/><rect x="2" y="9" width="2" height="2"/><rect x="5" y="9" width="2" height="2"/><rect x="8" y="9" width="2" height="2"/><rect x="11" y="9" width="2" height="2"/></g><rect x="22" y="3" width="14" height="10" fill="none" stroke="#dcdcdc" stroke-width="1.6"/><rect x="42" y="3" width="7" height="10" fill="#8a8a8a"/><rect x="50" y="3" width="7" height="10" fill="#8a8a8a"/><rect x="63" y="3" width="14" height="10" fill="none" stroke="#8a8a8a" stroke-width="1.4"/><rect x="84" y="3" width="13" height="10" rx="1" fill="#8a8a8a"/><circle cx="90" cy="8" r="3" fill="#555"/></svg>
<div class="b" style="left:344px;top:856px;width:1px;height:24px;background:#3a3a3a;"></div>
<svg class="a" style="left:352px;top:862px" width="22" height="12"><path d="M2 1H8V7H2Z M13 1H19V7H13Z" fill="none" stroke="#666"/><path d="M3 10V1" stroke="#666"/><path d="M14 10V1" stroke="#666"/></svg>
<div class="b" style="left:378px;top:856px;width:1px;height:24px;background:#3a3a3a;"></div>
<div class="t" style="left:384px;top:862.6px;font-size:9px;color:#8a8a8a;transform:scaleX(1.0);transform-origin:0 0;">★★★★★</div>
<div class="b" style="left:433px;top:856px;width:1px;height:24px;background:#3a3a3a;"></div>
<div class="b" style="left:439px;top:865px;width:5px;height:5px;background:#d23030;"></div>
<div class="b" style="left:449px;top:865px;width:5px;height:5px;background:#d8d030;"></div>
<div class="b" style="left:459px;top:865px;width:5px;height:5px;background:#30b030;"></div>
<div class="b" style="left:469px;top:865px;width:5px;height:5px;background:#3070d0;"></div>
<div class="b" style="left:479px;top:865px;width:5px;height:5px;background:#8040c0;"></div>
<div class="b" style="left:490px;top:856px;width:1px;height:24px;background:#3a3a3a;"></div>
<svg class="a" style="left:497px;top:862px" width="30" height="12"><path d="M2 1 Q2 7 9 7 L9 5 L12 8 L9 11 L9 9 Q0 9 0 1Z" fill="#a0a0a0"/><path d="M26 1 Q26 7 19 7 L19 5 L16 8 L19 11 L19 9 Q28 9 28 1Z" fill="#a0a0a0"/></svg>
<div class="b" style="left:530px;top:856px;width:1px;height:24px;background:#3a3a3a;"></div>
<svg class="a" style="left:535px;top:861px" width="14" height="14"><rect x="1" y="1" width="12" height="12" fill="none" stroke="#888" stroke-dasharray="2 1"/><rect x="4" y="4" width="6" height="6" fill="#888"/></svg>
<div class="b" style="left:1655px;top:856px;width:1px;height:24px;background:#3a3a3a;"></div>
<svg class="a" style="left:1670px;top:866px" width="6" height="4"><path d="M0 0H6L3 3Z" fill="#bbb"/></svg>
<div class="b" style="left:1687px;top:83px;width:2px;height:800px;background:#1a1a1a;"></div>
<div class="b" style="left:1689px;top:83px;width:210px;height:800px;background:#282828;"></div>
<div class="b" style="left:1898px;top:83px;width:12px;height:800px;background:#141414;"></div>
<div class="b" style="left:1899px;top:230px;width:9px;height:620px;background:#202020;"></div>
<div class="b" style="left:1900px;top:289px;width:7px;height:255px;background:#a6a6a6;border-radius:1px;"></div>
<div class="b" style="left:1689px;top:84px;width:209px;height:23px;background:#2a2a2a;"></div>
<div class="t" style="right:43px;top:88.0px;font-size:12.5px;color:#b4b4b4;transform:scaleX(0.84);transform-origin:100% 0;">Histogram</div>
<svg class="a" style="left:1885px;top:92px" width="7" height="6"><path d="M0 0H7L3.5 5Z" fill="#9a9a9a"/></svg>
<div class="b" style="left:1692px;top:107px;width:205px;height:125px;background:#474747;"></div>
<div class="b" style="left:1699px;top:113px;width:190px;height:81px;background:#3b3b3b;"></div>
<svg class="a" style="left:1699px;top:113px" width="190" height="81" viewBox="1699 113 190 81"><path d="M1700 193 L1700 115 L1702 115 C1704 150 1708 175 1716 183 L1760 186 L1790 185 L1812 183 L1830 186 L1888 193Z" fill="#c8c8c8"/><path d="M1703 160 C1706 175 1710 182 1716 184 L1760 187 L1764 176 L1776 171 L1790 168 L1800 170 L1808 165 L1813 145 L1818 165 L1822 180 L1830 188 L1765 189 L1716 190Z" fill="#2060c0"/><path d="M1802 180 L1815 172 L1822 162 L1827 130 L1832 160 L1836 176 L1842 188 L1800 190Z" fill="#3a9a4a"/><path d="M1825 176 L1829 150 L1836 128 L1840 150 L1843 140 L1847 158 L1851 138 L1854 170 L1857 190 L1830 190Z" fill="#d03030"/><path d="M1820 188 L1826 170 L1830 152 L1834 176 L1840 189Z" fill="#7a8a40" opacity="0.7"/><path d="M1705 178 L1712 184 L1716 180 L1710 176Z" fill="#d03030" opacity="0.8"/><rect x="1699" y="192" width="190" height="2" fill="#d8d8d8"/></svg>
<div class="t" style="left:1700px;top:197.6px;font-size:9px;color:#b8b8b8;transform:scaleX(0.82);transform-origin:0 0;">ISO 2800</div>
<div class="t" style="left:1756px;top:197.6px;font-size:9px;color:#b8b8b8;transform:scaleX(0.82);transform-origin:0 0;">150 mm</div>
<div class="t" style="left:1806px;top:197.6px;font-size:9px;color:#b8b8b8;transform:scaleX(0.82);transform-origin:0 0;">ƒ / 4.8</div>
<div class="t" style="right:33px;top:197.6px;font-size:9px;color:#b8b8b8;transform:scaleX(0.82);transform-origin:100% 0;">1/1600 sec</div>
<div class="b" style="left:1700px;top:220px;width:6px;height:4px;border:1px solid #777;"></div>
<div class="t" style="left:1713px;top:216.8px;font-size:9.5px;color:#8a8a8a;transform:scaleX(0.86);transform-origin:0 0;">Original Photo</div>
<div class="b" style="left:1692px;top:238px;width:205px;height:612px;background:#474747;"></div>
<div class="t" style="right:143px;top:244.3px;font-size:9.5px;color:#a0a0a0;transform:scaleX(0.86);transform-origin:100% 0;">Preset</div>
<div class="b" style="left:1785px;top:244px;width:105px;height:11px;background:#555555;"></div>
<div class="t" style="left:1788px;top:243.8px;font-size:9.5px;color:#7a7a7a;transform:scaleX(0.86);transform-origin:0 0;">None</div>
<div class="b" style="left:1878px;top:244px;width:11px;height:11px;background:#5f5f5f;"></div>
<div class="b" style="left:1692px;top:261px;width:205px;height:1px;background:#3a3a3a;"></div>
<div class="b" style="left:1692px;top:262px;width:205px;height:13px;background:#4b4b4b;"></div>
<div class="t" style="right:163px;top:262.3px;font-size:9.5px;color:#5c5c5c;transform:scaleX(0.86);transform-origin:100% 0;">Target Photo</div>
<div class="b" style="left:1786px;top:262px;width:1px;height:13px;background:#3a3a3a;"></div>
<div class="t" style="left:1796px;top:262.3px;font-size:9.5px;color:#5c5c5c;transform:scaleX(0.86);transform-origin:0 0;">Selected Photos</div>
<div class="b" style="left:1783px;top:280px;width:92px;height:48px;background:#4d4d4d;"></div>
<div class="t" style="right:143px;top:281.3px;font-size:9.5px;color:#8c8c8c;transform:scaleX(0.86);transform-origin:100% 0;">File Name</div>
<div class="t" style="left:1785px;top:281.3px;font-size:9.5px;color:#d4d4d4;transform:scaleX(0.835);transform-origin:0 0;">Blackpool_DSC3231-</div>
<div class="t" style="left:1785px;top:292.3px;font-size:9.5px;color:#d4d4d4;transform:scaleX(0.835);transform-origin:0 0;">20251219-</div>
<div class="t" style="left:1785px;top:303.3px;font-size:9.5px;color:#d4d4d4;transform:scaleX(0.835);transform-origin:0 0;">DxO_DeepPRIME</div>
<div class="t" style="left:1785px;top:314.3px;font-size:9.5px;color:#d4d4d4;transform:scaleX(0.835);transform-origin:0 0;">XD2s.dng</div>
<div class="b" style="left:1880px;top:318px;width:8px;height:1px;background:#777;"></div>
<div class="b" style="left:1880px;top:321px;width:8px;height:1px;background:#777;"></div>
<div class="b" style="left:1880px;top:324px;width:8px;height:1px;background:#777;"></div>
<div class="t" style="right:143px;top:329.3px;font-size:9.5px;color:#8c8c8c;transform:scaleX(0.86);transform-origin:100% 0;">Copy Name</div>
<div class="b" style="left:1783px;top:330px;width:92px;height:12px;background:#4d4d4d;"></div>
<div class="b" style="left:1879px;top:332px;width:10px;height:10px;background:#555;border:1px solid #626262;box-sizing:border-box;"></div>
<svg class="a" style="left:1880px;top:333px" width="8" height="8"><path d="M1 2H5 M1 4H6 M1 6H5 M5 2.5L7 4L5 5.5" stroke="#999" stroke-width="0.8" fill="none"/></svg>
<div class="t" style="right:143px;top:345.3px;font-size:9.5px;color:#8c8c8c;transform:scaleX(0.86);transform-origin:100% 0;">Folder</div>
<div class="t" style="left:1785px;top:345.3px;font-size:9.5px;color:#d4d4d4;transform:scaleX(0.835);transform-origin:0 0;">DxO</div>
<div class="b" style="left:1879px;top:346px;width:10px;height:10px;background:#555;border:1px solid #626262;box-sizing:border-box;"></div>
<svg class="a" style="left:1880px;top:347px" width="8" height="8"><path d="M1 2H5 M1 4H6 M1 6H5 M5 2.5L7 4L5 5.5" stroke="#999" stroke-width="0.8" fill="none"/></svg>
<div class="t" style="right:143px;top:359.3px;font-size:9.5px;color:#8c8c8c;transform:scaleX(0.86);transform-origin:100% 0;">File Size</div>
<div class="t" style="left:1785px;top:359.3px;font-size:9.5px;color:#d4d4d4;transform:scaleX(0.835);transform-origin:0 0;">132.89 MB</div>
<div class="t" style="right:143px;top:373.3px;font-size:9.5px;color:#8c8c8c;transform:scaleX(0.86);transform-origin:100% 0;">File Type</div>
<div class="t" style="left:1785px;top:373.3px;font-size:9.5px;color:#d4d4d4;transform:scaleX(0.835);transform-origin:0 0;">Digital Negative (DNG)</div>
<div class="t" style="right:143px;top:387.3px;font-size:9.5px;color:#8c8c8c;transform:scaleX(0.86);transform-origin:100% 0;">Metadata Status</div>
<div class="t" style="left:1785px;top:387.3px;font-size:9.5px;color:#d4d4d4;transform:scaleX(0.835);transform-origin:0 0;">Up to date</div>
<div class="b" style="left:1880px;top:390px;width:8px;height:1px;background:#777;"></div>
<div class="b" style="left:1880px;top:393px;width:8px;height:1px;background:#777;"></div>
<div class="b" style="left:1880px;top:396px;width:8px;height:1px;background:#777;"></div>
<div class="t" style="right:143px;top:401.3px;font-size:9.5px;color:#8c8c8c;transform:scaleX(0.86);transform-origin:100% 0;">Metadata Date</div>
<div class="t" style="left:1785px;top:401.3px;font-size:9.5px;color:#d4d4d4;transform:scaleX(0.835);transform-origin:0 0;">27/12/2025 20:23:49.568</div>
<svg class="a" style="left:1686px;top:270px" width="225" height="155"><path d="M7 6.5 L211 5.5 L212 40 L213 90 L214 120 L215 140 L214.5 146.5 M222 146 L7 147 L7 6.5" fill="none" stroke="#e0201e" stroke-width="2.8" stroke-linejoin="round"/></svg>
<div class="t" style="right:143px;top:423.3px;font-size:9.5px;color:#8c8c8c;transform:scaleX(0.86);transform-origin:100% 0;">Rating</div>
<div class="b" style="left:1788px;top:429px;width:2px;height:1px;background:#8a8a8a;"></div>
<div class="b" style="left:1800px;top:429px;width:2px;height:1px;background:#8a8a8a;"></div>
<div class="b" style="left:1812px;top:429px;width:2px;height:1px;background:#8a8a8a;"></div>
<div class="b" style="left:1824px;top:429px;width:2px;height:1px;background:#8a8a8a;"></div>
<div class="b" style="left:1836px;top:429px;width:2px;height:1px;background:#8a8a8a;"></div>
<div class="b" style="left:1692px;top:440px;width:205px;height:1px;background:#3f3f3f;"></div>
<div class="t" style="right:143px;top:447.3px;font-size:9.5px;color:#8c8c8c;transform:scaleX(0.86);transform-origin:100% 0;">Label</div>
<div class="b" style="left:1783px;top:447px;width:92px;height:12px;background:#4d4d4d;"></div>
<div class="b" style="left:1879px;top:449px;width:10px;height:10px;background:#555;border:1px solid #626262;box-sizing:border-box;"></div>
<svg class="a" style="left:1880px;top:450px" width="8" height="8"><path d="M1 2H5 M1 4H6 M1 6H5 M5 2.5L7 4L5 5.5" stroke="#999" stroke-width="0.8" fill="none"/></svg>
<div class="b" style="left:1692px;top:464px;width:205px;height:1px;background:#3f3f3f;"></div>
<div class="t" style="right:143px;top:470.3px;font-size:9.5px;color:#8c8c8c;transform:scaleX(0.86);transform-origin:100% 0;">Title</div>
<div class="b" style="left:1783px;top:469px;width:106px;height:50px;background:#4d4d4d;"></div>
<div class="t" style="right:143px;top:485.3px;font-size:9.5px;color:#8c8c8c;transform:scaleX(0.86);transform-origin:100% 0;">Caption</div>
<div class="t" style="left:1785px;top:531.2px;font-size:8px;color:#5e5e5e;transform:scaleX(0.82);transform-origin:0 0;">EXIF</div>
<div class="t" style="right:143px;top:544.3px;font-size:9.5px;color:#8c8c8c;transform:scaleX(0.86);transform-origin:100% 0;">File Dimensions</div>
<div class="t" style="left:1785px;top:544.3px;font-size:9.5px;color:#d4d4d4;transform:scaleX(0.835);transform-origin:0 0;">8256 x 5506</div>
<div class="t" style="right:143px;top:558.3px;font-size:9.5px;color:#8c8c8c;transform:scaleX(0.86);transform-origin:100% 0;">Current Dimensions</div>
<div class="t" style="left:1785px;top:558.3px;font-size:9.5px;color:#d4d4d4;transform:scaleX(0.835);transform-origin:0 0;">8256 x 5506</div>
<div class="t" style="right:143px;top:572.3px;font-size:9.5px;color:#8c8c8c;transform:scaleX(0.86);transform-origin:100% 0;">Exposure</div>
<div class="t" style="left:1785px;top:572.3px;font-size:9.5px;color:#d4d4d4;transform:scaleX(0.835);transform-origin:0 0;">1/1600 sec at ƒ / 4.8</div>
<div class="t" style="right:143px;top:586.3px;font-size:9.5px;color:#8c8c8c;transform:scaleX(0.86);transform-origin:100% 0;">Exposure Bias</div>
<div class="t" style="left:1785px;top:586.3px;font-size:9.5px;color:#d4d4d4;transform:scaleX(0.835);transform-origin:0 0;">0 EV</div>
<div class="t" style="right:143px;top:600.3px;font-size:9.5px;color:#8c8c8c;transform:scaleX(0.86);transform-origin:100% 0;">Flash</div>
<div class="t" style="left:1785px;top:600.3px;font-size:9.5px;color:#d4d4d4;transform:scaleX(0.835);transform-origin:0 0;">Did not fire</div>
<div class="t" style="right:143px;top:614.3px;font-size:9.5px;color:#8c8c8c;transform:scaleX(0.86);transform-origin:100% 0;">Exposure Program</div>
<div class="t" style="left:1785px;top:614.3px;font-size:9.5px;color:#d4d4d4;transform:scaleX(0.835);transform-origin:0 0;">Shutter priority</div>
<div class="t" style="right:143px;top:628.3px;font-size:9.5px;color:#8c8c8c;transform:scaleX(0.86);transform-origin:100% 0;">Metering Mode</div>
<div class="t" style="left:1785px;top:628.3px;font-size:9.5px;color:#d4d4d4;transform:scaleX(0.835);transform-origin:0 0;">Pattern</div>
<div class="t" style="right:143px;top:642.3px;font-size:9.5px;color:#8c8c8c;transform:scaleX(0.86);transform-origin:100% 0;">ISO Speed Rating</div>
<div class="t" style="left:1785px;top:642.3px;font-size:9.5px;color:#d4d4d4;transform:scaleX(0.835);transform-origin:0 0;">ISO 2800</div>
<div class="b" style="left:1879px;top:643px;width:10px;height:10px;background:#555;border:1px solid #626262;box-sizing:border-box;"></div>
<svg class="a" style="left:1880px;top:644px" width="8" height="8"><path d="M1 2H5 M1 4H6 M1 6H5 M5 2.5L7 4L5 5.5" stroke="#999" stroke-width="0.8" fill="none"/></svg>
<div class="t" style="right:143px;top:656.3px;font-size:9.5px;color:#8c8c8c;transform:scaleX(0.86);transform-origin:100% 0;">Focal Length</div>
<div class="t" style="left:1785px;top:656.3px;font-size:9.5px;color:#d4d4d4;transform:scaleX(0.835);transform-origin:0 0;">150 mm</div>
<div class="t" style="right:143px;top:670.3px;font-size:9.5px;color:#8c8c8c;transform:scaleX(0.86);transform-origin:100% 0;">Focal Length 35mm</div>
<div class="t" style="left:1785px;top:670.3px;font-size:9.5px;color:#d4d4d4;transform:scaleX(0.835);transform-origin:0 0;">150 mm</div>
<div class="t" style="right:143px;top:684.3px;font-size:9.5px;color:#8c8c8c;transform:scaleX(0.86);transform-origin:100% 0;">Lens</div>
<div class="t" style="left:1785px;top:684.3px;font-size:9.5px;color:#d4d4d4;transform:scaleX(0.835);transform-origin:0 0;">NIKKOR Z 100-400mm f/</div>
<div class="b" style="left:1879px;top:685px;width:10px;height:10px;background:#555;border:1px solid #626262;box-sizing:border-box;"></div>
<svg class="a" style="left:1880px;top:686px" width="8" height="8"><path d="M1 2H5 M1 4H6 M1 6H5 M5 2.5L7 4L5 5.5" stroke="#999" stroke-width="0.8" fill="none"/></svg>
<div class="t" style="right:143px;top:698.3px;font-size:9.5px;color:#8c8c8c;transform:scaleX(0.86);transform-origin:100% 0;">Date Time Original</div>
<div class="t" style="left:1785px;top:698.3px;font-size:9.5px;color:#d4d4d4;transform:scaleX(0.835);transform-origin:0 0;">19/12/2025 16:11:25.380</div>
<div class="b" style="left:1879px;top:699px;width:10px;height:10px;background:#555;border:1px solid #626262;box-sizing:border-box;"></div>
<svg class="a" style="left:1880px;top:700px" width="8" height="8"><path d="M1 2H5 M1 4H6 M1 6H5 M5 2.5L7 4L5 5.5" stroke="#999" stroke-width="0.8" fill="none"/></svg>
<div class="t" style="right:143px;top:712.3px;font-size:9.5px;color:#8c8c8c;transform:scaleX(0.86);transform-origin:100% 0;">Date Time Digitized</div>
<div class="t" style="left:1785px;top:712.3px;font-size:9.5px;color:#d4d4d4;transform:scaleX(0.835);transform-origin:0 0;">19/12/2025 16:11:25.380</div>
<div class="t" style="right:143px;top:726.3px;font-size:9.5px;color:#8c8c8c;transform:scaleX(0.86);transform-origin:100% 0;">Date Time</div>
<div class="t" style="left:1785px;top:726.3px;font-size:9.5px;color:#d4d4d4;transform:scaleX(0.835);transform-origin:0 0;">27/12/2025 20:23:31</div>
<div class="t" style="right:143px;top:740.3px;font-size:9.5px;color:#8c8c8c;transform:scaleX(0.86);transform-origin:100% 0;">Make</div>
<div class="t" style="left:1785px;top:740.3px;font-size:9.5px;color:#d4d4d4;transform:scaleX(0.835);transform-origin:0 0;">Nikon</div>
<div class="t" style="right:143px;top:754.3px;font-size:9.5px;color:#8c8c8c;transform:scaleX(0.86);transform-origin:100% 0;">Model</div>
<div class="t" style="left:1785px;top:754.3px;font-size:9.5px;color:#d4d4d4;transform:scaleX(0.835);transform-origin:0 0;">NIKON Z 8</div>
<div class="t" style="right:143px;top:768.3px;font-size:9.5px;color:#8c8c8c;transform:scaleX(0.86);transform-origin:100% 0;">Serial Number</div>
<div class="t" style="left:1785px;top:768.3px;font-size:9.5px;color:#d4d4d4;transform:scaleX(0.835);transform-origin:0 0;">6010551</div>
<div class="b" style="left:1879px;top:769px;width:10px;height:10px;background:#555;border:1px solid #626262;box-sizing:border-box;"></div>
<svg class="a" style="left:1880px;top:770px" width="8" height="8"><path d="M1 2H5 M1 4H6 M1 6H5 M5 2.5L7 4L5 5.5" stroke="#999" stroke-width="0.8" fill="none"/></svg>
<div class="t" style="right:143px;top:782.3px;font-size:9.5px;color:#8c8c8c;transform:scaleX(0.86);transform-origin:100% 0;">User Comment</div>
<div class="t" style="left:1785px;top:782.3px;font-size:9.5px;color:#d4d4d4;transform:scaleX(0.835);transform-origin:0 0;"></div>
<div class="b" style="left:1783px;top:781px;width:105px;height:13px;background:#4d4d4d;"></div>
<div class="t" style="right:143px;top:797.3px;font-size:9.5px;color:#8c8c8c;transform:scaleX(0.86);transform-origin:100% 0;">Artist</div>
<div class="t" style="left:1785px;top:797.3px;font-size:9.5px;color:#d4d4d4;transform:scaleX(0.835);transform-origin:0 0;">Patrick F Cray</div>
<div class="t" style="right:143px;top:811.3px;font-size:9.5px;color:#8c8c8c;transform:scaleX(0.86);transform-origin:100% 0;">Software</div>
<div class="t" style="left:1785px;top:811.3px;font-size:9.5px;color:#d4d4d4;transform:scaleX(0.835);transform-origin:0 0;">DxO PureRAW 4</div>
<div class="b" style="left:1783px;top:825px;width:88px;height:24px;background:#4d4d4d;"></div>
<div class="t" style="right:143px;top:825.3px;font-size:9.5px;color:#8c8c8c;transform:scaleX(0.86);transform-origin:100% 0;">GPS</div>
<div class="t" style="left:1785px;top:825.3px;font-size:9.5px;color:#d4d4d4;transform:scaleX(0.835);transform-origin:0 0;">53°47'0.8734&quot; N</div>
<div class="t" style="left:1785px;top:837.3px;font-size:9.5px;color:#d4d4d4;transform:scaleX(0.835);transform-origin:0 0;">3°3'28.1928&quot; W</div>
<div class="b" style="left:1879px;top:838px;width:10px;height:10px;background:#555;border:1px solid #626262;box-sizing:border-box;"></div>
<svg class="a" style="left:1880px;top:839px" width="8" height="8"><path d="M1 2H5 M1 4H6 M1 6H5 M5 2.5L7 4L5 5.5" stroke="#999" stroke-width="0.8" fill="none"/></svg>
<div class="b" style="left:1692px;top:850px;width:205px;height:7px;background:#2e2e2e;"></div>
<svg class="a" style="left:1791px;top:851px" width="6" height="4"><path d="M0 0H6L3 3Z" fill="#777"/></svg>
<div class="b" style="left:1693px;top:857px;width:14px;height:21px;background:linear-gradient(#3c3c3c,#333);border-radius:2px;"></div>
<div class="b" style="left:1697px;top:862px;width:5px;height:10px;background:none;border:1px solid #555;box-sizing:border-box;"></div>
<div class="b" style="left:1709px;top:857px;width:83px;height:21px;background:linear-gradient(#3e3e3e,#343434);border-radius:2px;"></div>
<div class="b" style="left:1796px;top:857px;width:98px;height:21px;background:linear-gradient(#3e3e3e,#343434);border-radius:2px;"></div>
<div class="t" style="left:1750px;top:861.4px;font-size:11px;color:#2a2a2a;transform:translateX(-50%) scaleX(0.88);transform-origin:50% 0;text-shadow:0 1px 0 #4a4a4a;">Sync</div>
<div class="t" style="left:1845px;top:861.4px;font-size:11px;color:#2a2a2a;transform:translateX(-50%) scaleX(0.88);transform-origin:50% 0;text-shadow:0 1px 0 #4a4a4a;">Sync Settings</div>
<div class="b" style="left:0px;top:883px;width:1920px;height:22px;background:#000;"></div>
<div class="b" style="left:11px;top:890px;width:13px;height:8px;border:1px solid #9a9a9a;box-sizing:border-box;"></div>
<div class="t" style="left:16px;top:890.9px;font-size:6px;color:#bbb;transform:scaleX(1);transform-origin:0 0;">1</div>
<div class="b" style="left:32px;top:890px;width:14px;height:8px;border:1px solid #666;box-sizing:border-box;"></div>
<div class="t" style="left:37px;top:890.9px;font-size:6px;color:#888;transform:scaleX(1);transform-origin:0 0;">2</div>
<div class="b" style="left:54px;top:887px;width:1px;height:14px;background:#222;"></div>
<svg class="a" style="left:63px;top:890px" width="50" height="10"><rect x="1" y="1" width="3" height="3" fill="#888"/><rect x="6" y="1" width="3" height="3" fill="#888"/><rect x="1" y="6" width="3" height="3" fill="#888"/><rect x="6" y="6" width="3" height="3" fill="#888"/><path d="M23 5 L27 1 V4 H29 V6 H27 V9Z" fill="#888"/><path d="M45 5 L41 1 V4 H39 V6 H41 V9Z" fill="#888"/></svg>
<div class="b" style="left:119px;top:887px;width:1px;height:14px;background:#222;"></div>
<div class="t" style="left:128px;top:888.7px;font-size:10.5px;color:#a8a8a8;transform:scaleX(0.8);transform-origin:0 0;">Folder : Blackpool 19-12-25</div>
<div class="t" style="left:252px;top:888.7px;font-size:10.5px;color:#8a8a8a;transform:scaleX(0.83);transform-origin:0 0;">92 photos / 1 selected /</div>
<div class="t" style="left:348px;top:888.7px;font-size:10.5px;color:#e8e8e8;transform:scaleX(0.815);transform-origin:0 0;">Blackpool_DSC3231-20251219-DxO_DeepPRIME XD2s.dng</div>
<div class="t" style="left:583px;top:888.2px;font-size:8px;color:#888;transform:scaleX(1);transform-origin:0 0;">˅</div>
<div class="t" style="right:133px;top:889.0px;font-size:10px;color:#a8a8a8;transform:scaleX(0.83);transform-origin:100% 0;">Filter :</div>
<div class="b" style="left:1796px;top:888px;width:96px;height:13px;background:#1c1c1c;"></div>
<div class="t" style="left:1800px;top:889.0px;font-size:10px;color:#a8a8a8;transform:scaleX(0.83);transform-origin:0 0;">Filters Off</div>
<div class="b" style="left:1882px;top:889px;width:9px;height:11px;background:#555;"></div>
<div class="b" style="left:1899px;top:888px;width:10px;height:13px;background:#555;"></div>
<div class="b" style="left:1899px;top:895px;width:10px;height:6px;background:#bbb;"></div>
<div class="b" style="left:0px;top:905px;width:1920px;height:140px;background:#000;"></div>
<div class="b" style="left:12px;top:906px;width:1896px;height:115px;background:#848484;"></div>
<div class="b" style="left:58px;top:906px;width:1px;height:115px;background:#7f7f7f;"></div>
<div class="t" style="left:68.0px;top:906.1px;font-size:14px;color:#5c5c5c;font-weight:bold;transform:scaleX(1.0);transform-origin:0 0;">77</div>
<div class="b" style="left:174px;top:906px;width:1px;height:115px;background:#7f7f7f;"></div>
<div class="t" style="left:183.64px;top:906.1px;font-size:14px;color:#5c5c5c;font-weight:bold;transform:scaleX(1.0);transform-origin:0 0;">78</div>
<div class="b" style="left:289px;top:906px;width:1px;height:115px;background:#7f7f7f;"></div>
<div class="t" style="left:299.28px;top:906.1px;font-size:14px;color:#5c5c5c;font-weight:bold;transform:scaleX(1.0);transform-origin:0 0;">79</div>
<div class="b" style="left:405px;top:906px;width:1px;height:115px;background:#7f7f7f;"></div>
<div class="t" style="left:414.92px;top:906.1px;font-size:14px;color:#5c5c5c;font-weight:bold;transform:scaleX(1.0);transform-origin:0 0;">80</div>
<div class="b" style="left:521px;top:906px;width:1px;height:115px;background:#7f7f7f;"></div>
<div class="t" style="left:530.56px;top:906.1px;font-size:14px;color:#5c5c5c;font-weight:bold;transform:scaleX(1.0);transform-origin:0 0;">81</div>
<div class="b" style="left:636px;top:906px;width:1px;height:115px;background:#7f7f7f;"></div>
<div class="t" style="left:646.2px;top:906.1px;font-size:14px;color:#5c5c5c;font-weight:bold;transform:scaleX(1.0);transform-origin:0 0;">82</div>
<div class="b" style="left:752px;top:906px;width:1px;height:115px;background:#7f7f7f;"></div>
<div class="t" style="left:761.84px;top:906.1px;font-size:14px;color:#5c5c5c;font-weight:bold;transform:scaleX(1.0);transform-origin:0 0;">83</div>
<div class="b" style="left:867px;top:906px;width:1px;height:115px;background:#7f7f7f;"></div>
<div class="t" style="left:877.48px;top:906.1px;font-size:14px;color:#5c5c5c;font-weight:bold;transform:scaleX(1.0);transform-origin:0 0;">84</div>
<div class="b" style="left:983px;top:906px;width:1px;height:115px;background:#7f7f7f;"></div>
<div class="t" style="left:993.12px;top:906.1px;font-size:14px;color:#5c5c5c;font-weight:bold;transform:scaleX(1.0);transform-origin:0 0;">85</div>
<div class="b" style="left:1099px;top:906px;width:1px;height:115px;background:#7f7f7f;"></div>
<div class="t" style="left:1108.76px;top:906.1px;font-size:14px;color:#5c5c5c;font-weight:bold;transform:scaleX(1.0);transform-origin:0 0;">86</div>
<div class="b" style="left:1214px;top:906px;width:1px;height:115px;background:#7f7f7f;"></div>
<div class="t" style="left:1224.4px;top:906.1px;font-size:14px;color:#5c5c5c;font-weight:bold;transform:scaleX(1.0);transform-origin:0 0;">87</div>
<div class="b" style="left:1330px;top:906px;width:116px;height:115px;background:#c3c3c3;"></div>
<div class="b" style="left:1330px;top:906px;width:1px;height:115px;background:#7f7f7f;"></div>
<div class="t" style="left:1340.04px;top:906.1px;font-size:14px;color:#787878;font-weight:bold;transform:scaleX(1.0);transform-origin:0 0;">88</div>
<div class="b" style="left:1446px;top:906px;width:1px;height:115px;background:#7f7f7f;"></div>
<div class="t" style="left:1455.68px;top:906.1px;font-size:14px;color:#5c5c5c;font-weight:bold;transform:scaleX(1.0);transform-origin:0 0;">89</div>
<div class="b" style="left:1561px;top:906px;width:1px;height:115px;background:#7f7f7f;"></div>
<div class="t" style="left:1571.32px;top:906.1px;font-size:14px;color:#5c5c5c;font-weight:bold;transform:scaleX(1.0);transform-origin:0 0;">90</div>
<div class="b" style="left:1677px;top:906px;width:1px;height:115px;background:#7f7f7f;"></div>
<div class="t" style="left:1686.96px;top:906.1px;font-size:14px;color:#5c5c5c;font-weight:bold;transform:scaleX(1.0);transform-origin:0 0;">91</div>
<div class="b" style="left:1793px;top:906px;width:1px;height:115px;background:#7f7f7f;"></div>
<div class="t" style="left:1802.6px;top:906.1px;font-size:14px;color:#5c5c5c;font-weight:bold;transform:scaleX(1.0);transform-origin:0 0;">92</div>
<div class="b" style="left:15px;top:918px;width:17px;height:92px;border:0px solid #555;overflow:hidden;"><svg width="17" height="92" style="display:block"><rect width="17" height="92" fill="#3c5a98"/><ellipse cx="-10" cy="45" rx="28" ry="32" fill="#15151f"/><circle cx="10" cy="50" r="3" fill="#9a50ff"/></svg></div>
<div class="b" style="left:84px;top:917px;width:63px;height:92px;border:1px solid #555;overflow:hidden;"><svg width="63" height="92" style="display:block"><defs><linearGradient id="bsky" x1="0" y1="0" x2="0" y2="1"><stop offset="0" stop-color="#30508c"/><stop offset="1" stop-color="#5a78b4"/></linearGradient><radialGradient id="bsph" cx="0.5" cy="0.25" r="0.7"><stop offset="0" stop-color="#3a3c50"/><stop offset="0.5" stop-color="#1c1c28"/><stop offset="1" stop-color="#0a0a10"/></radialGradient></defs><rect width="63" height="92" fill="url(#bsky)"/><ellipse cx="31.5" cy="44" rx="31" ry="37" fill="url(#bsph)"/><path d="M1 46 Q31 36 62 46 L62 60 Q31 52 1 62Z" fill="#050508" opacity="0.8"/><path d="M2 40 Q20 34 40 38" stroke="#c8c8d8" stroke-width="2" opacity="0.5" fill="none"/><rect x="26" y="35" width="10" height="6" fill="#ffb020"/><rect x="28" y="36" width="5" height="4" fill="#fff060"/><rect x="52" y="36" width="8" height="6" fill="#b050ff"/><rect x="50" y="37" width="3" height="4" fill="#40ff80"/><rect x="30" y="80" width="4" height="12" fill="#555"/><rect x="31" y="8" width="2" height="30" fill="#6a6a50" opacity="0.4"/></svg></div>
<div class="b" style="left:200px;top:917px;width:62px;height:92px;border:1px solid #555;overflow:hidden;"><svg width="62" height="92" style="display:block"><defs><linearGradient id="d1" x1="0" y1="0" x2="0" y2="1"><stop offset="0" stop-color="#46465a"/><stop offset="0.45" stop-color="#6a6878"/><stop offset="0.75" stop-color="#c8a080"/><stop offset="1" stop-color="#d09860"/></linearGradient><radialGradient id="d1s" cx="0.45" cy="0.35" r="0.7"><stop offset="0" stop-color="#2a2c50"/><stop offset="1" stop-color="#0c0c18"/></radialGradient></defs><rect width="62" height="92" fill="url(#d1)"/><path d="M0 20 L30 34" stroke="#222" stroke-width="1.2"/><path d="M0 14 Q30 8 62 12 M0 28 Q30 22 62 26" stroke="#444" stroke-width="0.5" fill="none"/><circle cx="31" cy="46" r="14" fill="url(#d1s)"/><circle cx="25" cy="47" r="1.4" fill="#ffc040"/><circle cx="34" cy="46" r="1.6" fill="#8080ff"/><rect x="30" y="60" width="2.4" height="24" fill="#111"/><circle cx="52" cy="42" r="3.5" fill="#bbb"/><rect x="51" y="45" width="2" height="34" fill="#111"/><path d="M0 72 L62 66 L62 92 L0 92Z" fill="#0a0a0a"/><path d="M0 68 H62" stroke="#333" stroke-width="0.7"/></svg></div>
<div class="b" style="left:316px;top:917px;width:62px;height:92px;border:1px solid #555;overflow:hidden;"><svg width="62" height="92" style="display:block"><defs><linearGradient id="d2" x1="0" y1="0" x2="0" y2="1"><stop offset="0" stop-color="#8a88a0"/><stop offset="0.45" stop-color="#b0a8b4"/><stop offset="0.75" stop-color="#e8c090"/><stop offset="1" stop-color="#d09860"/></linearGradient><radialGradient id="d2s" cx="0.45" cy="0.35" r="0.7"><stop offset="0" stop-color="#2a2c50"/><stop offset="1" stop-color="#0c0c18"/></radialGradient></defs><rect width="62" height="92" fill="url(#d2)"/><path d="M0 20 L30 34" stroke="#222" stroke-width="1.2"/><path d="M0 14 Q30 8 62 12 M0 28 Q30 22 62 26" stroke="#444" stroke-width="0.5" fill="none"/><circle cx="34" cy="42" r="14" fill="url(#d2s)"/><circle cx="28" cy="43" r="1.4" fill="#ffc040"/><circle cx="37" cy="42" r="1.6" fill="#8080ff"/><rect x="33" y="56" width="2.4" height="24" fill="#111"/><circle cx="55" cy="38" r="3.5" fill="#bbb"/><rect x="54" y="41" width="2" height="34" fill="#111"/><path d="M0 72 L62 66 L62 92 L0 92Z" fill="#0a0a0a"/><path d="M0 68 H62" stroke="#333" stroke-width="0.7"/></svg></div>
<div class="b" style="left:431px;top:917px;width:62px;height:92px;border:1px solid #555;overflow:hidden;"><svg width="62" height="92" style="display:block"><defs><linearGradient id="d3" x1="0" y1="0" x2="0" y2="1"><stop offset="0" stop-color="#9090a8"/><stop offset="0.45" stop-color="#b8aeb8"/><stop offset="0.75" stop-color="#ecc290"/><stop offset="1" stop-color="#d09860"/></linearGradient><radialGradient id="d3s" cx="0.45" cy="0.35" r="0.7"><stop offset="0" stop-color="#2a2c50"/><stop offset="1" stop-color="#0c0c18"/></radialGradient></defs><rect width="62" height="92" fill="url(#d3)"/><path d="M0 20 L30 34" stroke="#222" stroke-width="1.2"/><path d="M0 14 Q30 8 62 12 M0 28 Q30 22 62 26" stroke="#444" stroke-width="0.5" fill="none"/><circle cx="31" cy="42" r="14" fill="url(#d3s)"/><circle cx="25" cy="43" r="1.4" fill="#ffc040"/><circle cx="34" cy="42" r="1.6" fill="#8080ff"/><rect x="30" y="56" width="2.4" height="24" fill="#111"/><circle cx="52" cy="38" r="3.5" fill="#bbb"/><rect x="51" y="41" width="2" height="34" fill="#111"/><path d="M0 72 L62 66 L62 92 L0 92Z" fill="#0a0a0a"/><path d="M0 68 H62" stroke="#333" stroke-width="0.7"/></svg></div>
<div class="b" style="left:524px;top:927px;width:107px;height:72px;border:1px solid #444;overflow:hidden;"><svg width="107" height="72" style="display:block"><defs><linearGradient id="s81" x1="0" y1="0" x2="1" y2="1"><stop offset="0" stop-color="#34508a"/><stop offset="1" stop-color="#4a68a8"/></linearGradient></defs><rect width="107" height="72" fill="url(#s81)"/><path d="M0 30 Q40 26 107 16" stroke="#223" stroke-width="0.6" fill="none"/><path d="M10 40 Q50 34 107 26" stroke="#223" stroke-width="0.6" fill="none"/><ellipse cx="8" cy="36" rx="6" ry="14" fill="#c04020"/><ellipse cx="8" cy="36" rx="4" ry="11" fill="#e0a050"/><path d="M68 22 L102 10 L106 20 L72 32Z" fill="#d8d020"/><path d="M74 24 L98 15" stroke="#444" stroke-width="1"/><path d="M60 62 Q66 58 72 64" stroke="#dde" stroke-width="1" fill="none"/></svg></div>
<div class="b" style="left:640px;top:927px;width:108px;height:72px;border:1px solid #444;overflow:hidden;"><svg width="108" height="72" style="display:block"><defs><linearGradient id="n1" x1="0" y1="0" x2="0" y2="1"><stop offset="0" stop-color="#232a44"/><stop offset="0.5" stop-color="#323a56"/><stop offset="0.56" stop-color="#16161c"/><stop offset="1" stop-color="#0e0e12"/></linearGradient></defs><rect width="108" height="72" fill="url(#n1)"/><rect x="37" y="0" width="6" height="72" fill="#44444c" opacity="0.85"/><rect x="28" y="2" width="1.5" height="50" fill="#3a3a44"/><rect x="80" y="2" width="1.5" height="50" fill="#3a3a44"/><rect x="54" y="23" width="34" height="7" fill="#5050e0" opacity="0.75"/><rect x="58" y="25" width="10" height="3" fill="#9090ff" opacity="0.6"/><circle cx="28" cy="2" r="1.6" fill="#ffd080"/><circle cx="50" cy="13" r="1.4" fill="#ffd080" opacity="0.8"/><circle cx="85" cy="3" r="1.3" fill="#ffd080" opacity="0.8"/><path d="M40 72 L80 54" stroke="#6a6030" stroke-width="0.6"/><rect x="58" y="42" width="9" height="5" rx="1.5" fill="#b8b8c0" opacity="0.8"/><circle cx="71" cy="45" r="1.6" fill="#ffe0a0" opacity="0.8"/><circle cx="75" cy="45" r="1.3" fill="#ffe0a0" opacity="0.7"/></svg></div>
<div class="b" style="left:755px;top:927px;width:108px;height:72px;border:1px solid #444;overflow:hidden;"><svg width="108" height="72" style="display:block"><defs><linearGradient id="n2" x1="0" y1="0" x2="0" y2="1"><stop offset="0" stop-color="#232a44"/><stop offset="0.5" stop-color="#323a56"/><stop offset="0.56" stop-color="#16161c"/><stop offset="1" stop-color="#0e0e12"/></linearGradient></defs><rect width="108" height="72" fill="url(#n2)"/><rect x="37" y="0" width="6" height="72" fill="#44444c" opacity="0.85"/><rect x="28" y="2" width="1.5" height="50" fill="#3a3a44"/><rect x="80" y="2" width="1.5" height="50" fill="#3a3a44"/><rect x="54" y="23" width="34" height="7" fill="#5050e0" opacity="0.75"/><rect x="58" y="25" width="10" height="3" fill="#9090ff" opacity="0.6"/><circle cx="28" cy="2" r="1.6" fill="#ffd080"/><circle cx="50" cy="13" r="1.4" fill="#ffd080" opacity="0.8"/><circle cx="85" cy="3" r="1.3" fill="#ffd080" opacity="0.8"/><path d="M40 72 L80 54" stroke="#6a6030" stroke-width="0.6"/><rect x="50" y="42" width="9" height="5" rx="1.5" fill="#b8b8c0" opacity="0.8"/><circle cx="71" cy="45" r="1.6" fill="#ffe0a0" opacity="0.8"/><circle cx="75" cy="45" r="1.3" fill="#ffe0a0" opacity="0.7"/></svg></div>
<div class="b" style="left:871px;top:927px;width:108px;height:72px;border:1px solid #444;overflow:hidden;"><svg width="108" height="72" style="display:block"><defs><linearGradient id="n3" x1="0" y1="0" x2="0" y2="1"><stop offset="0" stop-color="#232a44"/><stop offset="0.5" stop-color="#323a56"/><stop offset="0.56" stop-color="#16161c"/><stop offset="1" stop-color="#0e0e12"/></linearGradient></defs><rect width="108" height="72" fill="url(#n3)"/><rect x="37" y="0" width="6" height="72" fill="#44444c" opacity="0.85"/><rect x="28" y="2" width="1.5" height="50" fill="#3a3a44"/><rect x="80" y="2" width="1.5" height="50" fill="#3a3a44"/><rect x="54" y="23" width="34" height="7" fill="#5050e0" opacity="0.75"/><rect x="58" y="25" width="10" height="3" fill="#9090ff" opacity="0.6"/><circle cx="28" cy="2" r="1.6" fill="#ffd080"/><circle cx="50" cy="13" r="1.4" fill="#ffd080" opacity="0.8"/><circle cx="85" cy="3" r="1.3" fill="#ffd080" opacity="0.8"/><path d="M40 72 L80 54" stroke="#6a6030" stroke-width="0.6"/><circle cx="71" cy="45" r="1.6" fill="#ffe0a0" opacity="0.8"/><circle cx="75" cy="45" r="1.3" fill="#ffe0a0" opacity="0.7"/><rect x="0" y="41" width="26" height="10" rx="3" fill="#c8c8d0" opacity="0.9"/></svg></div>
<div class="b" style="left:986px;top:927px;width:108px;height:72px;border:1px solid #444;overflow:hidden;"><svg width="108" height="72" style="display:block"><defs><linearGradient id="wsk" x1="0" y1="0" x2="0" y2="1"><stop offset="0" stop-color="#c4b8c0"/><stop offset="0.45" stop-color="#dcb494"/><stop offset="0.75" stop-color="#e4a466"/></linearGradient></defs><rect width="108" height="72" fill="url(#wsk)"/><path d="M0 12 Q50 4 108 2" stroke="#555" stroke-width="0.5" fill="none"/><circle cx="60" cy="29" r="12" fill="#17133a"/><circle cx="54" cy="30" r="1.3" fill="#ffb040"/><circle cx="60" cy="29" r="1.5" fill="#7070ff"/><rect x="59" y="41" width="2" height="30" fill="#111"/><circle cx="28" cy="35" r="2.5" fill="#d0c8d0"/><rect x="27.2" y="37" width="1.6" height="40" fill="#111"/><circle cx="36" cy="32" r="2.5" fill="#d0c8d0"/><rect x="35.2" y="34" width="1.6" height="40" fill="#111"/><circle cx="49" cy="29" r="2.5" fill="#d0c8d0"/><rect x="48.2" y="31" width="1.6" height="40" fill="#111"/><path d="M86 70 Q84 20 110 2" stroke="#0c0c0c" stroke-width="3" fill="none"/><path d="M0 48 H108 M0 52 H108" stroke="#222" stroke-width="0.8"/><path d="M0 56 L108 54 L108 72 L0 72Z" fill="#0c0a0a"/></svg></div>
<div class="b" style="left:1102px;top:927px;width:107px;height:72px;border:1px solid #444;overflow:hidden;"><svg width="107" height="72" style="display:block"><defs><linearGradient id="wsk" x1="0" y1="0" x2="0" y2="1"><stop offset="0" stop-color="#c4b8c0"/><stop offset="0.45" stop-color="#dcb494"/><stop offset="0.75" stop-color="#e4a466"/></linearGradient></defs><rect width="108" height="72" fill="url(#wsk)"/><path d="M0 12 Q50 4 108 2" stroke="#555" stroke-width="0.5" fill="none"/><circle cx="56" cy="20" r="12" fill="#17133a"/><circle cx="50" cy="21" r="1.3" fill="#ffb040"/><circle cx="56" cy="20" r="1.5" fill="#7070ff"/><rect x="55" y="32" width="2" height="30" fill="#111"/><circle cx="24" cy="26" r="2.5" fill="#d0c8d0"/><rect x="23.2" y="28" width="1.6" height="40" fill="#111"/><circle cx="32" cy="23" r="2.5" fill="#d0c8d0"/><rect x="31.2" y="25" width="1.6" height="40" fill="#111"/><circle cx="45" cy="20" r="2.5" fill="#d0c8d0"/><rect x="44.2" y="22" width="1.6" height="40" fill="#111"/><path d="M82 70 Q80 20 106 2" stroke="#0c0c0c" stroke-width="3" fill="none"/><path d="M0 48 H108 M0 52 H108" stroke="#222" stroke-width="0.8"/><path d="M0 56 L108 54 L108 72 L0 72Z" fill="#0c0a0a"/></svg></div>
<div class="b" style="left:1217px;top:927px;width:108px;height:72px;border:1px solid #444;overflow:hidden;"><svg width="108" height="72" style="display:block"><defs><linearGradient id="wsk" x1="0" y1="0" x2="0" y2="1"><stop offset="0" stop-color="#c4b8c0"/><stop offset="0.45" stop-color="#dcb494"/><stop offset="0.75" stop-color="#e4a466"/></linearGradient></defs><rect width="108" height="72" fill="url(#wsk)"/><path d="M0 12 Q50 4 108 2" stroke="#555" stroke-width="0.5" fill="none"/><circle cx="60" cy="20" r="14" fill="#17133a"/><circle cx="54" cy="21" r="1.3" fill="#ffb040"/><circle cx="60" cy="20" r="1.5" fill="#7070ff"/><rect x="59" y="34" width="2" height="30" fill="#111"/><circle cx="28" cy="26" r="2.5" fill="#d0c8d0"/><rect x="27.2" y="28" width="1.6" height="40" fill="#111"/><circle cx="36" cy="23" r="2.5" fill="#d0c8d0"/><rect x="35.2" y="25" width="1.6" height="40" fill="#111"/><circle cx="49" cy="20" r="2.5" fill="#d0c8d0"/><rect x="48.2" y="22" width="1.6" height="40" fill="#111"/><path d="M120 70 Q118 20 144 2" stroke="#0c0c0c" stroke-width="3" fill="none"/><path d="M0 48 H108 M0 52 H108" stroke="#222" stroke-width="0.8"/><path d="M0 56 L108 54 L108 72 L0 72Z" fill="#0c0a0a"/></svg></div>
<div class="b" style="left:1332px;top:926px;width:108px;height:72px;border:2px solid #f4f4f4;overflow:hidden;"><svg width="108" height="72" style="display:block"><rect width="108" height="72" fill="#d8b494"/><rect y="57.6" width="108" height="14.4" fill="#050404"/><use href="#ph" x="0" y="0" width="108.0" height="72.0"/></svg></div>
<div class="b" style="left:1449px;top:927px;width:108px;height:72px;border:1px solid #444;overflow:hidden;"><svg width="108" height="72" style="display:block"><rect width="108" height="72" fill="#d8b494"/><rect y="57.6" width="108" height="14.4" fill="#050404"/><use href="#ph" x="1" y="1" width="108.0" height="72.0"/></svg></div>
<div class="b" style="left:1565px;top:927px;width:108px;height:72px;border:1px solid #444;overflow:hidden;"><svg width="108" height="72" style="display:block"><rect width="108" height="72" fill="#d8b494"/><rect y="57.6" width="108" height="14.4" fill="#050404"/><use href="#ph" x="-11" y="-6.7" width="129.6" height="86.39999999999999"/></svg></div>
<div class="b" style="left:1680px;top:927px;width:108px;height:72px;border:1px solid #444;overflow:hidden;"><svg width="108" height="72" style="display:block"><rect width="108" height="72" fill="#d8b494"/><rect y="57.6" width="108" height="14.4" fill="#050404"/><use href="#ph" x="8.5" y="-3.6" width="122.03999999999999" height="81.35999999999999"/></svg></div>
<div class="b" style="left:1796px;top:927px;width:107px;height:72px;border:1px solid #444;overflow:hidden;"><svg width="107" height="72" style="display:block"><rect width="107" height="72" fill="#c8b098"/><rect y="0" width="107" height="20" fill="#c4aa98"/><rect x="58" y="0" width="1" height="30" fill="#333"/><path d="M0 30 H107 M0 34 H107" stroke="#333" stroke-width="0.8"/><path d="M18 72 L26 26 Q30 20 40 20 L107 22 L107 72Z" fill="#17161a"/><rect x="50" y="30" width="10" height="6" fill="#8a8a4a" opacity="0.8"/><rect x="64" y="30" width="10" height="6" fill="#8a8a4a" opacity="0.8"/><path d="M0 46 L107 60 L107 72 L0 72Z" fill="#0c0c0c"/></svg></div>
<div class="b" style="left:12px;top:906px;width:16px;height:115px;background:linear-gradient(90deg,#000,rgba(0,0,0,0));"></div>
<div class="b" style="left:132px;top:1002px;width:15px;height:8px;background:#0c0c0c;"></div><svg class="a" style="left:133px;top:1002px" width="7" height="7"><path d="M3.5 0.5 L6.5 3.5 L3.5 6.5 L0.5 3.5Z" fill="none" stroke="#9a9a9a" stroke-width="0.9"/></svg><div class="b" style="left:141px;top:1003px;width:5px;height:5px;background:#e0e0e0;border-radius:1px;"></div>
<div class="b" style="left:247px;top:1002px;width:15px;height:8px;background:#0c0c0c;"></div><svg class="a" style="left:248px;top:1002px" width="7" height="7"><path d="M3.5 0.5 L6.5 3.5 L3.5 6.5 L0.5 3.5Z" fill="none" stroke="#9a9a9a" stroke-width="0.9"/></svg><div class="b" style="left:256px;top:1003px;width:5px;height:5px;background:#e0e0e0;border-radius:1px;"></div>
<div class="b" style="left:363px;top:1002px;width:15px;height:8px;background:#0c0c0c;"></div><svg class="a" style="left:364px;top:1002px" width="7" height="7"><path d="M3.5 0.5 L6.5 3.5 L3.5 6.5 L0.5 3.5Z" fill="none" stroke="#9a9a9a" stroke-width="0.9"/></svg><div class="b" style="left:372px;top:1003px;width:5px;height:5px;background:#e0e0e0;border-radius:1px;"></div>
<div class="b" style="left:478px;top:1002px;width:15px;height:8px;background:#0c0c0c;"></div><svg class="a" style="left:479px;top:1002px" width="7" height="7"><path d="M3.5 0.5 L6.5 3.5 L3.5 6.5 L0.5 3.5Z" fill="none" stroke="#9a9a9a" stroke-width="0.9"/></svg><div class="b" style="left:487px;top:1003px;width:5px;height:5px;background:#e0e0e0;border-radius:1px;"></div>
<div class="b" style="left:616px;top:992px;width:15px;height:8px;background:#0c0c0c;"></div><svg class="a" style="left:617px;top:992px" width="7" height="7"><path d="M3.5 0.5 L6.5 3.5 L3.5 6.5 L0.5 3.5Z" fill="none" stroke="#9a9a9a" stroke-width="0.9"/></svg><div class="b" style="left:625px;top:993px;width:5px;height:5px;background:#e0e0e0;border-radius:1px;"></div>
<div class="b" style="left:732px;top:992px;width:15px;height:8px;background:#0c0c0c;"></div><svg class="a" style="left:733px;top:992px" width="7" height="7"><path d="M3.5 0.5 L6.5 3.5 L3.5 6.5 L0.5 3.5Z" fill="none" stroke="#9a9a9a" stroke-width="0.9"/></svg><div class="b" style="left:741px;top:993px;width:5px;height:5px;background:#e0e0e0;border-radius:1px;"></div>
<div class="b" style="left:848px;top:992px;width:15px;height:8px;background:#0c0c0c;"></div><svg class="a" style="left:849px;top:992px" width="7" height="7"><path d="M3.5 0.5 L6.5 3.5 L3.5 6.5 L0.5 3.5Z" fill="none" stroke="#9a9a9a" stroke-width="0.9"/></svg><div class="b" style="left:857px;top:993px;width:5px;height:5px;background:#e0e0e0;border-radius:1px;"></div>
<div class="b" style="left:964px;top:992px;width:15px;height:8px;background:#0c0c0c;"></div><svg class="a" style="left:965px;top:992px" width="7" height="7"><path d="M3.5 0.5 L6.5 3.5 L3.5 6.5 L0.5 3.5Z" fill="none" stroke="#9a9a9a" stroke-width="0.9"/></svg><div class="b" style="left:973px;top:993px;width:5px;height:5px;background:#e0e0e0;border-radius:1px;"></div>
<div class="b" style="left:1079px;top:992px;width:15px;height:8px;background:#0c0c0c;"></div><svg class="a" style="left:1080px;top:992px" width="7" height="7"><path d="M3.5 0.5 L6.5 3.5 L3.5 6.5 L0.5 3.5Z" fill="none" stroke="#9a9a9a" stroke-width="0.9"/></svg><div class="b" style="left:1088px;top:993px;width:5px;height:5px;background:#e0e0e0;border-radius:1px;"></div>
<div class="b" style="left:1194px;top:992px;width:15px;height:8px;background:#0c0c0c;"></div><svg class="a" style="left:1195px;top:992px" width="7" height="7"><path d="M3.5 0.5 L6.5 3.5 L3.5 6.5 L0.5 3.5Z" fill="none" stroke="#9a9a9a" stroke-width="0.9"/></svg><div class="b" style="left:1203px;top:993px;width:5px;height:5px;background:#e0e0e0;border-radius:1px;"></div>
<div class="b" style="left:1310px;top:992px;width:15px;height:8px;background:#0c0c0c;"></div><svg class="a" style="left:1311px;top:992px" width="7" height="7"><path d="M3.5 0.5 L6.5 3.5 L3.5 6.5 L0.5 3.5Z" fill="none" stroke="#9a9a9a" stroke-width="0.9"/></svg><div class="b" style="left:1319px;top:993px;width:5px;height:5px;background:#e0e0e0;border-radius:1px;"></div>
<div class="b" style="left:1541px;top:992px;width:15px;height:8px;background:#0c0c0c;"></div><svg class="a" style="left:1542px;top:992px" width="7" height="7"><path d="M3.5 0.5 L6.5 3.5 L3.5 6.5 L0.5 3.5Z" fill="none" stroke="#9a9a9a" stroke-width="0.9"/></svg><div class="b" style="left:1550px;top:993px;width:5px;height:5px;background:#e0e0e0;border-radius:1px;"></div>
<div class="b" style="left:1657px;top:992px;width:15px;height:8px;background:#0c0c0c;"></div><svg class="a" style="left:1658px;top:992px" width="7" height="7"><path d="M3.5 0.5 L6.5 3.5 L3.5 6.5 L0.5 3.5Z" fill="none" stroke="#9a9a9a" stroke-width="0.9"/></svg><div class="b" style="left:1666px;top:993px;width:5px;height:5px;background:#e0e0e0;border-radius:1px;"></div>
<div class="b" style="left:1772px;top:992px;width:15px;height:8px;background:#0c0c0c;"></div><svg class="a" style="left:1773px;top:992px" width="7" height="7"><path d="M3.5 0.5 L6.5 3.5 L3.5 6.5 L0.5 3.5Z" fill="none" stroke="#9a9a9a" stroke-width="0.9"/></svg><div class="b" style="left:1781px;top:993px;width:5px;height:5px;background:#e0e0e0;border-radius:1px;"></div>
<div class="b" style="left:1888px;top:992px;width:15px;height:8px;background:#0c0c0c;"></div><svg class="a" style="left:1889px;top:992px" width="7" height="7"><path d="M3.5 0.5 L6.5 3.5 L3.5 6.5 L0.5 3.5Z" fill="none" stroke="#9a9a9a" stroke-width="0.9"/></svg><div class="b" style="left:1897px;top:993px;width:5px;height:5px;background:#e0e0e0;border-radius:1px;"></div>
<div class="b" style="left:16px;top:1002px;width:15px;height:8px;background:#0c0c0c;"></div><svg class="a" style="left:17px;top:1002px" width="7" height="7"><path d="M3.5 0.5 L6.5 3.5 L3.5 6.5 L0.5 3.5Z" fill="none" stroke="#9a9a9a" stroke-width="0.9"/></svg><div class="b" style="left:25px;top:1003px;width:5px;height:5px;background:#e0e0e0;border-radius:1px;"></div>
<div class="b" style="left:1412px;top:992px;width:29px;height:8px;background:#0c0c0c;"></div><svg class="a" style="left:1413px;top:992px" width="7" height="7"><path d="M3.5 0.5 L6.5 3.5 L3.5 6.5 L0.5 3.5Z" fill="none" stroke="#9a9a9a" stroke-width="0.9"/></svg><div class="b" style="left:1421px;top:993px;width:5px;height:5px;background:#e0e0e0;border-radius:1px;"></div><div class="b" style="left:1428px;top:993px;width:5px;height:5px;background:#e0e0e0;border-radius:1px;"></div><div class="b" style="left:1435px;top:993px;width:5px;height:5px;background:#e0e0e0;border-radius:1px;"></div>
<div class="b" style="left:12px;top:1031px;width:1896px;height:1px;background:#1c1c1c;"></div>
<div class="b" style="left:12px;top:1042px;width:1896px;height:1px;background:#161616;"></div>
<div class="b" style="left:1570px;top:1024px;width:338px;height:5px;background:#a8a8a8;"></div>
<svg class="a" style="left:956px;top:1037px" width="8" height="4"><path d="M0 0H8L4 4Z" fill="#555"/></svg>
<svg class="a" style="left:3px;top:964px" width="5" height="8"><path d="M5 0V8L0 4Z" fill="#777"/></svg>
<svg class="a" style="left:3px;top:480px" width="5" height="8"><path d="M5 0V8L0 4Z" fill="#777"/></svg>
<svg class="a" style="left:1912px;top:480px" width="5" height="8"><path d="M0 0V8L5 4Z" fill="#777"/></svg>
<div class="b" style="left:0px;top:1045px;width:1920px;height:36px;background:#e6e5e4;"></div>
<svg class="a" style="left:14px;top:1049px" width="24" height="26"><circle cx="15" cy="8" r="5" fill="#f0a030"/><path d="M3 22 Q1 15 8 15 Q10 10 15 12 Q21 11 21 17 Q24 18 22 22Z" fill="#b8c8e8"/><circle cx="14" cy="6" r="5" fill="#d83030"/><text x="12" y="9" font-size="7" fill="#fff" font-family="Liberation Sans">1</text></svg>
<div class="t" style="left:38px;top:1050.3px;font-size:9.5px;color:#222;transform:scaleX(0.95);transform-origin:0 0;">6°C</div>
<div class="t" style="left:38px;top:1063.3px;font-size:9.5px;color:#505050;transform:scaleX(0.96);transform-origin:0 0;">Mostly cloudy</div>
<svg class="a" style="left:504px;top:1055px" width="18" height="18"><rect x="0" y="0" width="8.5" height="8.5" fill="#2a8fe8"/><rect x="9.5" y="0" width="8.5" height="8.5" fill="#3aa0f0"/><rect x="0" y="9.5" width="8.5" height="8.5" fill="#2a8fe8"/><rect x="9.5" y="9.5" width="8.5" height="8.5" fill="#3aa0f0"/></svg>
<div class="b" style="left:533px;top:1052px;width:160px;height:21px;background:#f7f7f7;border:1px solid #d8d8d8;border-radius:11px;"></div>
<svg class="a" style="left:539px;top:1056px" width="14" height="14"><circle cx="6" cy="6" r="4.5" fill="none" stroke="#222" stroke-width="1.5"/><path d="M9 9L13 13" stroke="#222" stroke-width="1.5"/></svg>
<div class="t" style="left:559px;top:1056.7px;font-size:10.5px;color:#555;transform:scaleX(0.9);transform-origin:0 0;">Search</div>
<svg class="a" style="left:664px;top:1054px" width="26" height="18"><rect x="6" y="3" width="14" height="12" rx="1" fill="#e05050"/><rect x="6" y="7" width="14" height="8" fill="#d8d8e0"/><circle cx="3" cy="9" r="2" fill="#ffc080" opacity="0.6"/><circle cx="23" cy="9" r="2" fill="#ffc080" opacity="0.6"/></svg>
<div class="b" style="left:1034px;top:1049px;width:24px;height:27px;background:#f7f5f3;border-radius:4px;"></div>
<div class="b" style="left:1039px;top:1074px;width:13px;height:3px;background:#d83030;border-radius:1px;"></div>
<svg class="a" style="left:704px;top:1054px" width="18" height="18"><rect x="1" y="4" width="12" height="12" fill="#222"/><rect x="4" y="1" width="12" height="12" fill="#ddd"/><rect x="4" y="4" width="9" height="9" fill="#eee"/></svg>
<svg class="a" style="left:737px;top:1054px" width="18" height="18"><path d="M1 4 H7 L9 6 H17 V16 H1Z" fill="#f0c030"/><rect x="3" y="10" width="12" height="5" fill="#2a7ad0"/></svg>
<svg class="a" style="left:770px;top:1054px" width="18" height="18"><circle cx="9" cy="9" r="8" fill="#e04030"/><path d="M9 9 L17 9 A8 8 0 0 1 3 15Z" fill="#30a050"/><path d="M9 9 L3 15 A8 8 0 0 1 9 1 Z" fill="#f0c030" opacity="0.9"/><circle cx="9" cy="9" r="3.8" fill="#fff"/><circle cx="9" cy="9" r="2.8" fill="#3080e0"/></svg>
<svg class="a" style="left:803px;top:1054px" width="18" height="18"><rect x="1" y="3" width="16" height="14" rx="1" fill="#1a5aa8"/><rect x="5" y="6" width="4" height="4" fill="#f05030"/><rect x="10" y="6" width="4" height="4" fill="#60c030"/><rect x="5" y="11" width="4" height="4" fill="#30a0f0"/><rect x="10" y="11" width="4" height="4" fill="#f0c030"/></svg>
<svg class="a" style="left:836px;top:1054px" width="18" height="18"><rect x="1" y="1" width="16" height="16" fill="#111"/><path d="M4 10 Q9 3 15 8 Q9 12 4 10Z" fill="#76b900"/></svg>
<svg class="a" style="left:869px;top:1054px" width="18" height="18"><circle cx="7" cy="8" r="6" fill="#30a0f0"/><circle cx="11" cy="7" r="5" fill="#c050e0"/><rect x="5" y="12" width="12" height="5" fill="#222"/></svg>
<svg class="a" style="left:902px;top:1054px" width="18" height="18"><rect x="1" y="2" width="16" height="15" rx="1" fill="#2a2a2a"/><rect x="3" y="4" width="12" height="3" fill="#ddd"/></svg>
<svg class="a" style="left:935px;top:1054px" width="18" height="18"><circle cx="9" cy="9" r="8" fill="#ff7030"/><circle cx="9" cy="10" r="5" fill="#8040c0"/><path d="M2 6 Q9 -2 16 6 Q12 3 9 5Z" fill="#ffb020"/></svg>
<svg class="a" style="left:968px;top:1054px" width="18" height="18"><circle cx="9" cy="9" r="8" fill="#1a70d0"/><circle cx="10" cy="9" r="4" fill="#e8f0ff"/></svg>
<svg class="a" style="left:1001px;top:1054px" width="18" height="18"><rect x="1" y="1" width="16" height="16" rx="3" fill="#1a2a3a"/><path d="M4 4L14 14M14 4L4 14" stroke="#e0e8f0" stroke-width="1.5"/></svg>
<svg class="a" style="left:1034px;top:1054px" width="18" height="18"><rect x="1" y="1" width="16" height="16" rx="3" fill="#001e36"/><text x="2.5" y="13" font-size="9" font-weight="bold" fill="#31a8ff" font-family="Liberation Sans">LrC</text></svg>
<svg class="a" style="left:1067px;top:1054px" width="18" height="18"><rect x="1" y="1" width="16" height="16" rx="3" fill="#001e36"/><text x="3.5" y="13" font-size="10" font-weight="bold" fill="#31a8ff" font-family="Liberation Sans">Lr</text></svg>
<svg class="a" style="left:1100px;top:1054px" width="18" height="18"><rect x="1" y="1" width="16" height="16" rx="3" fill="#111"/><text x="2.5" y="13" font-size="10" font-weight="bold" fill="#fff" font-family="Liberation Sans">Br</text></svg>
<svg class="a" style="left:1133px;top:1054px" width="18" height="18"><rect x="1" y="1" width="16" height="16" rx="3" fill="#001e36"/><text x="2.5" y="13" font-size="10" font-weight="bold" fill="#31a8ff" font-family="Liberation Sans">Ps</text></svg>
<svg class="a" style="left:1166px;top:1054px" width="18" height="18"><rect x="1" y="1" width="16" height="16" rx="2" fill="#102030"/><text x="3" y="14" font-size="9" fill="#60b0ff" font-family="Liberation Sans">PL</text></svg>
<svg class="a" style="left:1199px;top:1054px" width="18" height="18"><rect x="1" y="1" width="16" height="16" rx="2" fill="#201810"/><text x="3" y="14" font-size="9" fill="#ff7030" font-family="Liberation Sans">FP</text></svg>
<svg class="a" style="left:1232px;top:1054px" width="18" height="18"><rect x="1" y="1" width="16" height="16" rx="2" fill="#15181c"/><text x="3" y="14" font-size="9" fill="#c0c8d0" font-family="Liberation Sans">VP</text></svg>
<svg class="a" style="left:1265px;top:1054px" width="18" height="18"><rect x="1" y="1" width="16" height="16" rx="2" fill="#10201c"/><text x="3" y="14" font-size="9" fill="#40c0a0" font-family="Liberation Sans">PR</text></svg>
<svg class="a" style="left:1298px;top:1054px" width="18" height="18"><rect x="1" y="1" width="16" height="16" rx="3" fill="#1a4a9a"/><circle cx="9" cy="9" r="5" fill="none" stroke="#cde" stroke-width="1.5"/></svg>
<svg class="a" style="left:1331px;top:1054px" width="18" height="18"><rect x="1" y="1" width="16" height="16" rx="4" fill="#e04080"/><rect x="1" y="1" width="8" height="16" rx="4" fill="#f0a030" opacity="0.7"/><circle cx="9" cy="10" r="4" fill="none" stroke="#fff" stroke-width="1.5"/></svg>
<svg class="a" style="left:1364px;top:1054px" width="18" height="18"><rect x="1" y="1" width="10" height="10" fill="none" stroke="#d03030" stroke-dasharray="2 1.5"/><path d="M8 10 L15 17 M13 9 L8 16" stroke="#2a90d0" stroke-width="1.5"/></svg>
<svg class="a" style="left:1397px;top:1054px" width="18" height="18"><path d="M1 5 H17 V13 L14 10 L11 14 L7 9 L4 13 L1 11Z" fill="#2a9ae0"/><rect x="1" y="13" width="16" height="3" fill="#8fd0f8"/></svg>
<div class="b" style="left:844px;top:1076px;width:4px;height:2px;background:#888;border-radius:1px;"></div>
<div class="b" style="left:943px;top:1076px;width:4px;height:2px;background:#888;border-radius:1px;"></div>
<div class="b" style="left:1307px;top:1076px;width:4px;height:2px;background:#888;border-radius:1px;"></div>
<div class="b" style="left:1340px;top:1076px;width:4px;height:2px;background:#888;border-radius:1px;"></div>
<div class="b" style="left:1373px;top:1076px;width:4px;height:2px;background:#888;border-radius:1px;"></div>
<div class="b" style="left:1406px;top:1076px;width:4px;height:2px;background:#888;border-radius:1px;"></div>
<svg class="a" style="left:1769px;top:1058px" width="12" height="8"><path d="M1 7L6 2L11 7" stroke="#333" stroke-width="1.3" fill="none"/></svg>
<svg class="a" style="left:1790px;top:1056px" width="16" height="12"><path d="M3 10 Q0 10 1 7 Q1 4 5 5 Q7 1 11 3 Q15 4 14 8 Q15 10 12 10Z" fill="none" stroke="#333" stroke-width="1.2"/></svg>
<svg class="a" style="left:1815px;top:1054px" width="16" height="15"><rect x="1" y="2" width="13" height="9" fill="none" stroke="#333" stroke-width="1.2"/><path d="M5 13H10" stroke="#333"/></svg>
<svg class="a" style="left:1834px;top:1055px" width="14" height="14"><path d="M1 5H4L8 1V13L4 9H1Z" fill="none" stroke="#333" stroke-width="1.1"/><path d="M10 4Q12 7 10 10" stroke="#333" fill="none"/></svg>
<div class="t" style="right:14px;top:1050.3px;font-size:9.5px;color:#222;transform:scaleX(0.9);transform-origin:100% 0;">20:26</div>
<div class="t" style="right:14px;top:1063.3px;font-size:9.5px;color:#222;transform:scaleX(0.9);transform-origin:100% 0;">27/12/2025</div>
</body></html>
